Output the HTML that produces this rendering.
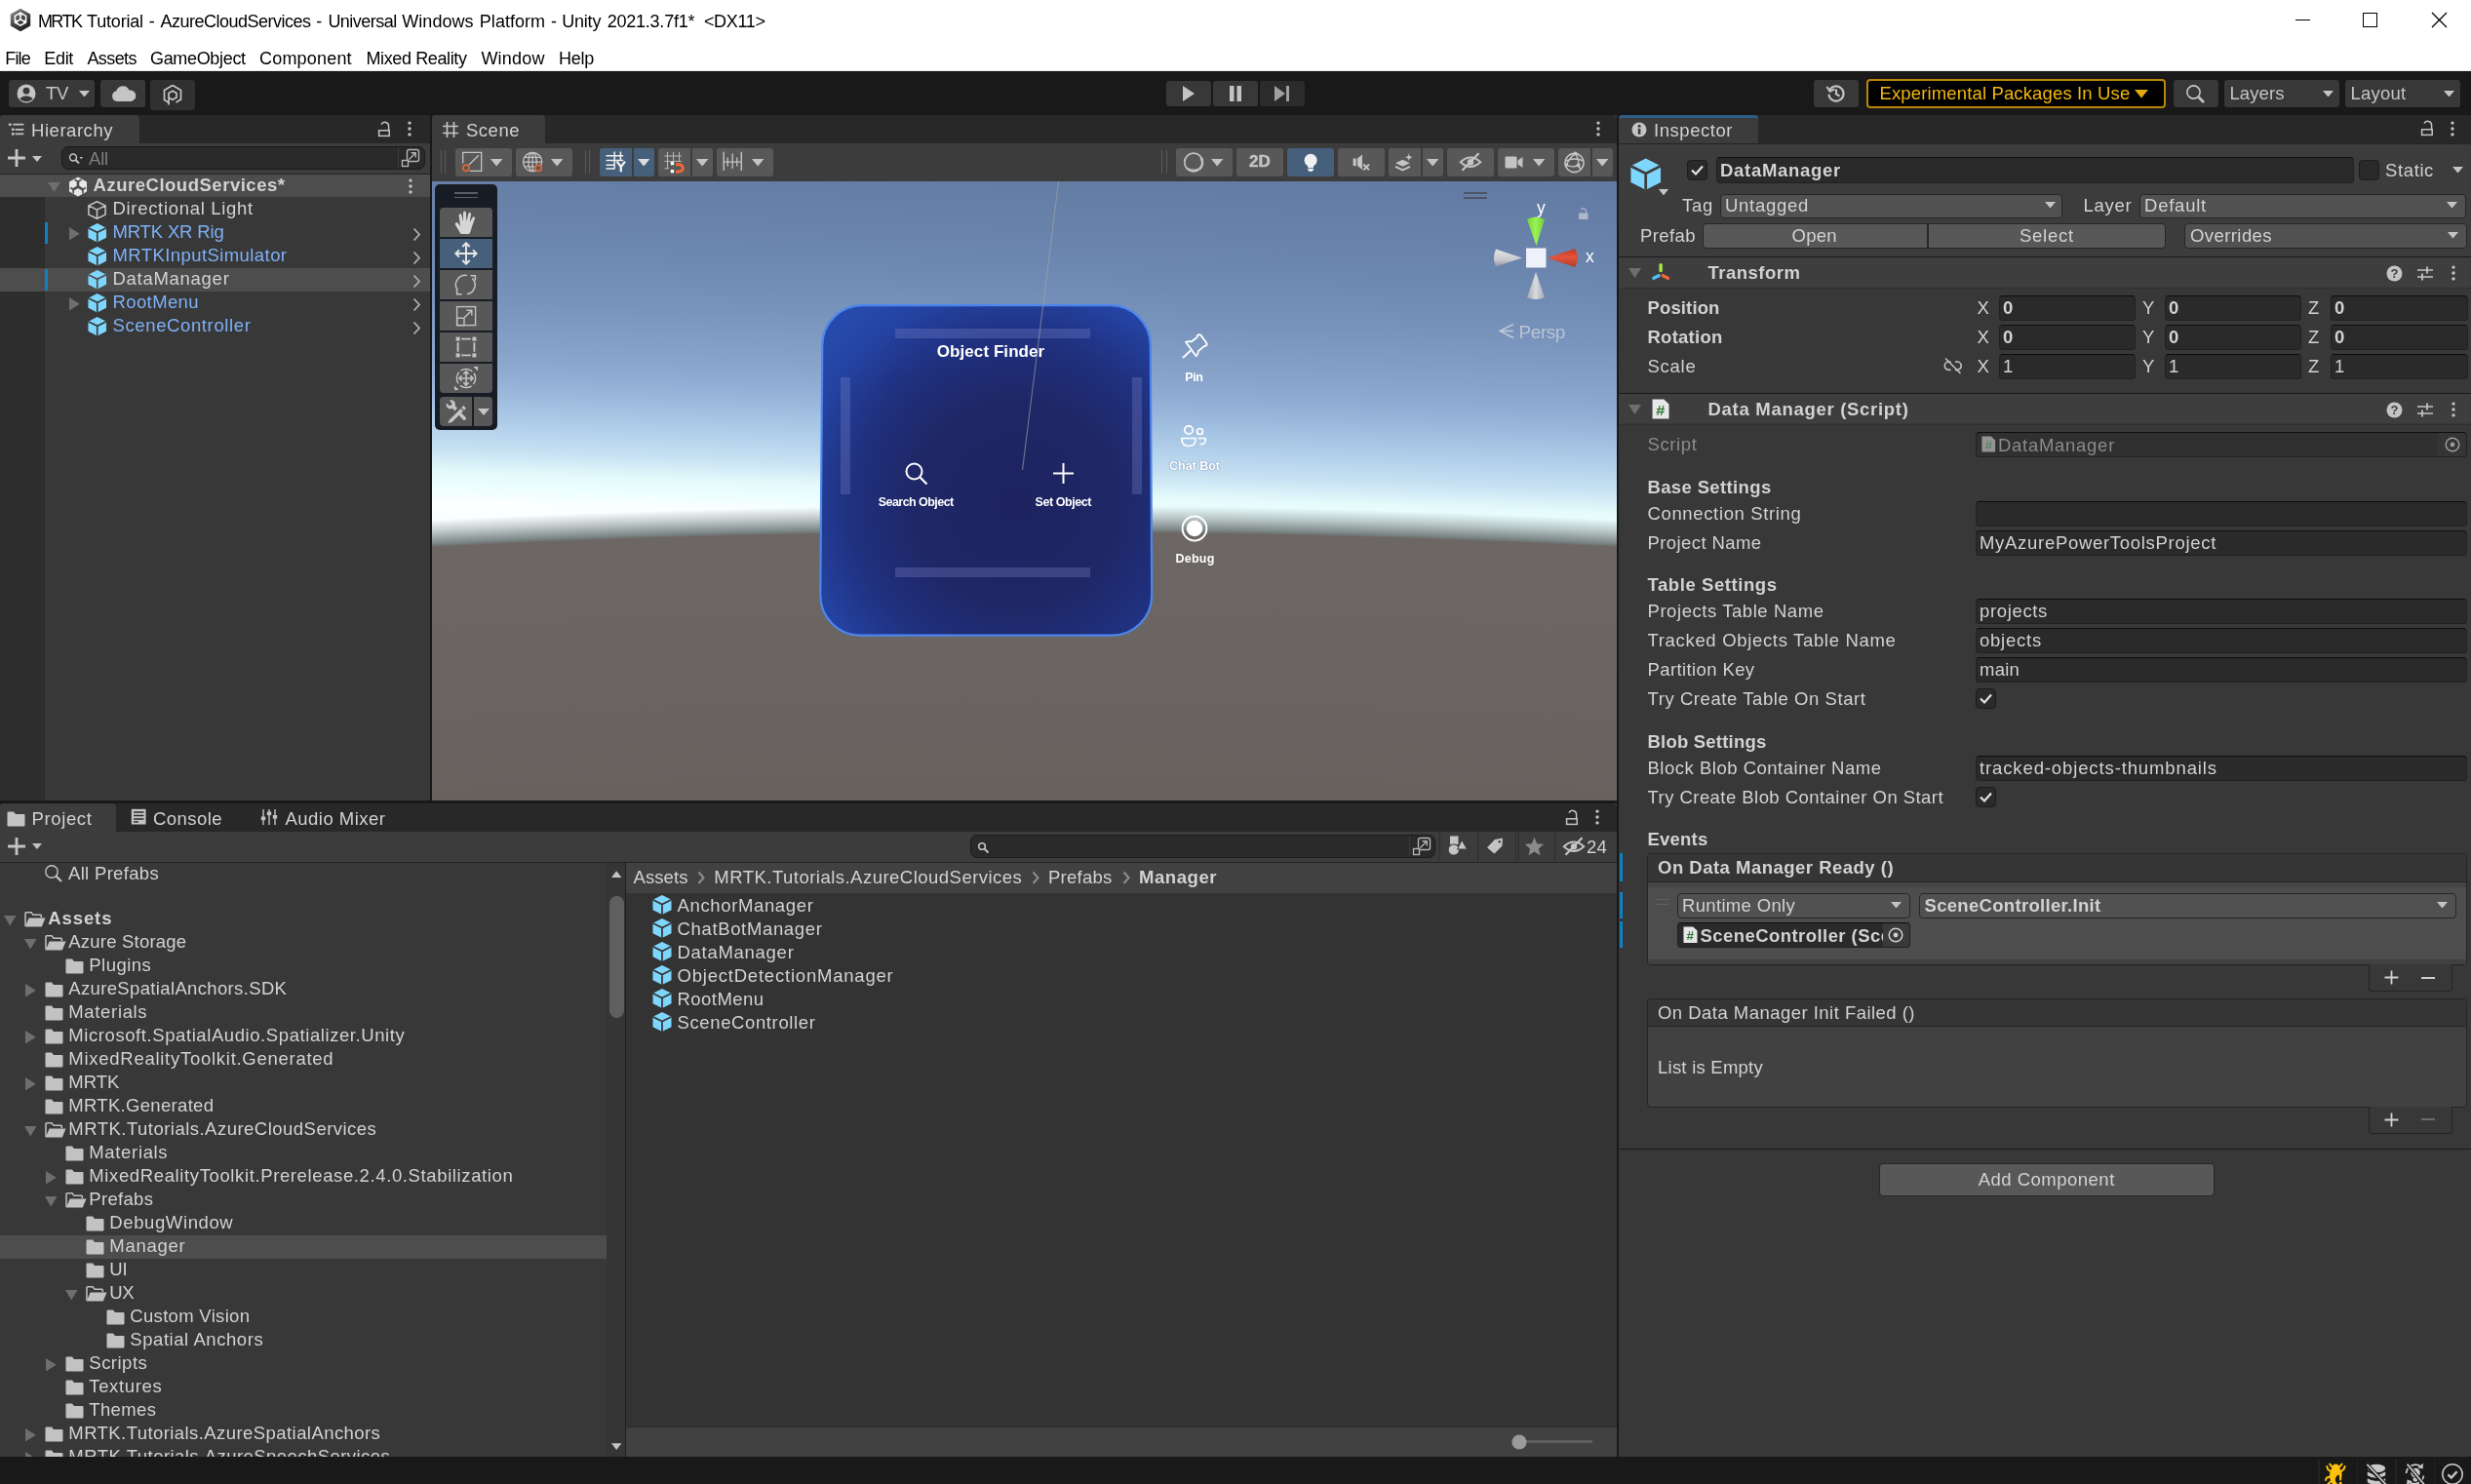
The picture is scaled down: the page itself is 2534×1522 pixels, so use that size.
<!DOCTYPE html>
<html><head><meta charset="utf-8"><title>Unity</title><style>
html,body{margin:0;padding:0;}
body{will-change:transform;width:2534px;height:1522px;position:relative;overflow:hidden;background:#383838;font-family:"Liberation Sans",sans-serif;}
div,svg{position:absolute;}
.t{white-space:nowrap;}
</style></head><body>
<div style="left:0px;top:0px;width:2534px;height:72px;background:#ffffff;"></div>
<div style="left:0px;top:72px;width:2534px;height:1px;background:#e8e8e8;"></div>
<svg style="left:9px;top:8px;" width="24" height="25" viewBox="0 0 24 25"><defs><linearGradient id="ul" x1="0" y1="0" x2="0.6" y2="1"><stop offset="0" stop-color="#9a9a9a"/><stop offset="0.55" stop-color="#4a4a4a"/><stop offset="1" stop-color="#1c1c1c"/></linearGradient></defs><path d="M12 0.8 L22.2 6.6 L22.2 18.4 L12 24.2 L1.8 18.4 L1.8 6.6 Z" fill="url(#ul)"/><path d="M12 5.2 L17.6 8.4 L17.6 15 L12 18.2 L6.4 15 L6.4 8.4 Z" fill="none" stroke="#fff" stroke-width="1.5"/><path d="M12 5.2 V11.8 M6.4 15 L12 11.8 L17.6 15" fill="none" stroke="#fff" stroke-width="1.5"/><path d="M10.2 7 H13.8 M7 12.6 L8.8 15.6 M17 12.6 L15.2 15.6" stroke="#fff" stroke-width="1.2"/></svg>
<div class="t" style="left:38.9px;top:11.3px;font-size:18px;line-height:23px;color:#000;letter-spacing:-1.52px;">MRTK</div>
<div class="t" style="left:89.0px;top:11.3px;font-size:18px;line-height:23px;color:#000;letter-spacing:-0.18px;">Tutorial</div>
<div class="t" style="left:152.8px;top:11.3px;font-size:18px;line-height:23px;color:#000;letter-spacing:0.00px;">-</div>
<div class="t" style="left:164.5px;top:11.3px;font-size:18px;line-height:23px;color:#000;letter-spacing:-0.50px;">AzureCloudServices</div>
<div class="t" style="left:324.3px;top:11.3px;font-size:18px;line-height:23px;color:#000;letter-spacing:0.00px;">-</div>
<div class="t" style="left:336.4px;top:11.3px;font-size:18px;line-height:23px;color:#000;letter-spacing:-0.52px;">Universal</div>
<div class="t" style="left:412.3px;top:11.3px;font-size:18px;line-height:23px;color:#000;letter-spacing:0.04px;">Windows</div>
<div class="t" style="left:491.8px;top:11.3px;font-size:18px;line-height:23px;color:#000;letter-spacing:0.04px;">Platform</div>
<div class="t" style="left:565.0px;top:11.3px;font-size:18px;line-height:23px;color:#000;letter-spacing:0.00px;">-</div>
<div class="t" style="left:576.2px;top:11.3px;font-size:18px;line-height:23px;color:#000;letter-spacing:-0.20px;">Unity</div>
<div class="t" style="left:622.7px;top:11.3px;font-size:18px;line-height:23px;color:#000;letter-spacing:-0.23px;">2021.3.7f1*</div>
<div class="t" style="left:721.9px;top:11.3px;font-size:18px;line-height:23px;color:#000;letter-spacing:-0.32px;">&lt;DX11&gt;</div>
<div style="left:2354px;top:20px;width:15px;height:1.3px;background:#000;"></div>
<div style="left:2423px;top:13px;width:15px;height:15px;border:1.3px solid #000;box-sizing:border-box;"></div>
<svg style="left:2493px;top:12px;" width="17" height="17" viewBox="0 0 17 17"><path d="M1 1 L16 16 M16 1 L1 16" stroke="#000" stroke-width="1.3"/></svg>
<div class="t" style="left:5.2px;top:48.5px;font-size:18px;line-height:23px;color:#000;letter-spacing:-0.80px;">File</div>
<div class="t" style="left:45.3px;top:48.5px;font-size:18px;line-height:23px;color:#000;letter-spacing:-0.33px;">Edit</div>
<div class="t" style="left:89.4px;top:48.5px;font-size:18px;line-height:23px;color:#000;letter-spacing:-0.59px;">Assets</div>
<div class="t" style="left:154.0px;top:48.5px;font-size:18px;line-height:23px;color:#000;letter-spacing:-0.33px;">GameObject</div>
<div class="t" style="left:266.0px;top:48.5px;font-size:18px;line-height:23px;color:#000;letter-spacing:0.19px;">Component</div>
<div class="t" style="left:375.5px;top:48.5px;font-size:18px;line-height:23px;color:#000;letter-spacing:-0.38px;">Mixed Reality</div>
<div class="t" style="left:493.4px;top:48.5px;font-size:18px;line-height:23px;color:#000;letter-spacing:0.21px;">Window</div>
<div class="t" style="left:573.0px;top:48.5px;font-size:18px;line-height:23px;color:#000;letter-spacing:-0.25px;">Help</div>
<div style="left:0px;top:73px;width:2534px;height:45px;background:#191919;"></div>
<div style="left:9px;top:82px;width:88px;height:28px;background:#383838;border-radius:3px;"></div>
<div style="left:103px;top:82px;width:46px;height:28px;background:#383838;border-radius:3px;"></div>
<div style="left:154px;top:82px;width:46px;height:31px;background:#303030;border-radius:3px;"></div>
<svg style="left:16px;top:85px;" width="22" height="22" viewBox="0 0 22 22"><circle cx="11" cy="11" r="9.5" fill="#c4c4c4"/><circle cx="11" cy="8.2" r="3.4" fill="#383838"/><path d="M4.2 16 Q11 10.5 17.8 16 Q15 19.2 11 19.2 Q7 19.2 4.2 16Z" fill="#383838"/></svg>
<div class="t" style="left:47.0px;top:84.0px;font-size:18.5px;line-height:24px;color:#c4c4c4;letter-spacing:-0.32px;">TV</div>
<svg style="left:80.5px;top:92.75px;" width="11" height="6.5" viewBox="0 0 11 6.5"><path d="M0 0 L11 0 L5.5 6.5 Z" fill="#c4c4c4"/></svg>
<svg style="left:113px;top:87px;" width="28" height="18" viewBox="0 0 28 18"><path d="M7 17 A5.5 5.5 0 0 1 6.3 6.2 A7 7 0 0 1 19.5 5.5 A5.8 5.8 0 0 1 21.5 17 Z" fill="#c4c4c4"/></svg>
<svg style="left:166px;top:86px;" width="22" height="24" viewBox="0 0 22 24"><path d="M11 1.5 L19.5 6.5 L19.5 16 L14.5 19 M11 1.5 L2.5 6.5 L2.5 16.5 L7 19.2" fill="none" stroke="#c4c4c4" stroke-width="1.7"/><path d="M7 21.5 L7 9.5 L11 7.2 L15 9.5 L15 14 L11 16.3 L7.8 14.5" fill="none" stroke="#c4c4c4" stroke-width="1.7"/></svg>
<div style="left:1196px;top:83px;width:46px;height:26px;background:#383838;border-radius:3px;"></div>
<div style="left:1244px;top:83px;width:46px;height:26px;background:#383838;border-radius:3px;"></div>
<div style="left:1292px;top:83px;width:46px;height:26px;background:#2b2b2b;border-radius:3px;"></div>
<svg style="left:1212px;top:87px;" width="14" height="18" viewBox="0 0 14 18"><path d="M1 1 L13 9 L1 17 Z" fill="#c4c4c4"/></svg>
<svg style="left:1260px;top:87px;" width="14" height="18" viewBox="0 0 14 18"><rect x="1" y="1" width="4.5" height="16" fill="#c4c4c4"/><rect x="8.5" y="1" width="4.5" height="16" fill="#c4c4c4"/></svg>
<svg style="left:1306px;top:87px;" width="18" height="18" viewBox="0 0 18 18"><path d="M1 1 L12 9 L1 17 Z" fill="#a0a0a0"/><rect x="13" y="1" width="3" height="16" fill="#a0a0a0"/></svg>
<div style="left:1860px;top:82px;width:46px;height:28px;background:#383838;border-radius:3px;"></div>
<svg style="left:1872px;top:86px;" width="22" height="20" viewBox="0 0 22 20"><path d="M4.2 6.5 A7.6 7.6 0 1 1 3.4 10.8" fill="none" stroke="#c4c4c4" stroke-width="2.1"/><path d="M1.4 3 L4.6 7.6 L9.4 5.4" fill="none" stroke="#c4c4c4" stroke-width="2.1"/><path d="M11 5.5 L11 10.5 L14.5 12.6" fill="none" stroke="#c4c4c4" stroke-width="2.1"/></svg>
<div style="left:1914px;top:81px;width:307px;height:30px;background:#000;border:2px solid #b8860b;border-radius:4px;box-sizing:border-box;"></div>
<div class="t" style="left:1927.5px;top:84.0px;font-size:18.5px;line-height:24px;color:#f2b70f;letter-spacing:0.14px;">Experimental Packages In Use</div>
<svg style="left:2189.0px;top:92.25px;" width="14" height="8.5" viewBox="0 0 14 8.5"><path d="M0 0 L14 0 L7.0 8.5 Z" fill="#e2a90a"/></svg>
<div style="left:2229px;top:82px;width:46px;height:28px;background:#383838;border-radius:3px;"></div>
<svg style="left:2240px;top:85px;" width="24" height="24" viewBox="0 0 24 24"><circle cx="9.5" cy="9.5" r="6.6" fill="none" stroke="#c4c4c4" stroke-width="1.6"/><path d="M14.5 14.5 L20 20" stroke="#c4c4c4" stroke-width="2.6"/></svg>
<div style="left:2281px;top:82px;width:118px;height:28px;background:#383838;border-radius:3px;"></div>
<div style="left:2405px;top:82px;width:118px;height:28px;background:#383838;border-radius:3px;"></div>
<div class="t" style="left:2286.5px;top:84.0px;font-size:18.5px;line-height:24px;color:#c4c4c4;letter-spacing:0.08px;">Layers</div>
<div class="t" style="left:2410.5px;top:84.0px;font-size:18.5px;line-height:24px;color:#c4c4c4;letter-spacing:0.24px;">Layout</div>
<svg style="left:2382.0px;top:92.75px;" width="11" height="6.5" viewBox="0 0 11 6.5"><path d="M0 0 L11 0 L5.5 6.5 Z" fill="#c4c4c4"/></svg>
<svg style="left:2506.0px;top:92.75px;" width="11" height="6.5" viewBox="0 0 11 6.5"><path d="M0 0 L11 0 L5.5 6.5 Z" fill="#c4c4c4"/></svg>
<div style="left:0px;top:1494px;width:2534px;height:28px;background:#191919;"></div>
<div style="left:0px;top:118px;width:441px;height:29px;background:#282828;"></div>
<div style="left:0px;top:118px;width:143px;height:29px;background:#3c3c3c;border-radius:4px 4px 0 0;"></div>
<svg style="left:6px;top:125px;" width="20" height="15" viewBox="0 0 20 15"><path d="M7.3 2.7 H18.3 M9.6 7.8 H18.3 M9.6 12.4 H18.3" stroke="#c4c4c4" stroke-width="1.7"/><rect x="2.9" y="1.4" width="2.7" height="2.6" rx="0.8" fill="#c4c4c4"/><rect x="5.9" y="6.5" width="2.7" height="2.6" rx="0.8" fill="#c4c4c4"/><rect x="5.9" y="11.1" width="2.7" height="2.6" rx="0.8" fill="#c4c4c4"/></svg>
<div class="t" style="left:32.0px;top:121.5px;font-size:18.5px;line-height:24px;color:#d2d2d2;letter-spacing:0.54px;">Hierarchy</div>
<svg style="left:386px;top:123px;" width="16" height="18" viewBox="0 0 16 18"><rect x="2.6" y="10.8" width="10.6" height="5.6" fill="none" stroke="#c4c4c4" stroke-width="1.5"/><path d="M12.6 10.8 V6.2 A4 4 0 0 0 5 4.6" fill="none" stroke="#c4c4c4" stroke-width="1.5"/></svg>
<svg style="left:417px;top:122px;" width="6" height="20" viewBox="0 0 6 20"><circle cx="3" cy="4.1" r="1.7" fill="#c4c4c4"/><circle cx="3" cy="10.0" r="1.7" fill="#c4c4c4"/><circle cx="3" cy="15.9" r="1.7" fill="#c4c4c4"/></svg>
<div style="left:0px;top:147px;width:441px;height:32px;background:#3c3c3c;"></div>
<div style="left:0px;top:178px;width:441px;height:1px;background:#232323;"></div>
<svg style="left:7px;top:152px;" width="20" height="20" viewBox="0 0 20 20"><path d="M10 1 V19 M1 10 H19" stroke="#c4c4c4" stroke-width="2.8"/></svg>
<svg style="left:33.0px;top:160.0px;" width="10" height="6" viewBox="0 0 10 6"><path d="M0 0 L10 0 L5.0 6 Z" fill="#c4c4c4"/></svg>
<div style="left:62.5px;top:150px;width:373.5px;height:24px;background:#2a2a2a;border:1px solid #1b1b1b;border-radius:7px;box-sizing:border-box;"></div>
<div style="left:408px;top:151px;width:1px;height:22px;background:#3c3c3c;"></div>
<svg style="left:70px;top:156px;" width="16" height="14" viewBox="0 0 16 14"><circle cx="5" cy="5.5" r="3.4" fill="none" stroke="#c4c4c4" stroke-width="1.5"/><path d="M7.5 8 L11 11.5" stroke="#c4c4c4" stroke-width="1.8"/><path d="M11.5 5 L15 5 L13.2 7.2Z" fill="#c4c4c4"/></svg>
<div class="t" style="left:91.0px;top:151.0px;font-size:18.5px;line-height:24px;color:#7f7f7f;letter-spacing:-0.19px;">All</div>
<svg style="left:411px;top:151.5px;" width="20" height="20" viewBox="0 0 20 20"><rect x="6.5" y="1.5" width="12" height="12" rx="2" fill="none" stroke="#b4b4b4" stroke-width="1.4"/><rect x="1.5" y="12.5" width="6" height="6" fill="#2a2a2a" stroke="#b4b4b4" stroke-width="1.4"/><path d="M8.5 11.5 L15 5 M10.5 4.8 L15.2 4.8 L15.2 9.5" fill="none" stroke="#b4b4b4" stroke-width="1.4"/></svg>
<div style="left:0px;top:179px;width:441px;height:642px;background:#383838;"></div>
<div style="left:0px;top:179px;width:46px;height:642px;background:#2d2d2d;"></div>
<div style="left:0px;top:179px;width:441px;height:23px;background:#4d4d4d;"></div>
<div style="left:0px;top:275px;width:441px;height:24px;background:#4d4d4d;"></div>
<svg style="left:49.0px;top:186.5px;" width="13" height="10" viewBox="0 0 13 10"><path d="M0 0 L13 0 L6.5 10 Z" fill="#6e6e6e"/></svg>
<svg style="left:69px;top:180px;" width="22" height="23" viewBox="0 0 22 23"><path d="M11 1.5 L20 6.5 L20 16.5 L11 21.5 L2 16.5 L2 6.5 Z" fill="#e6e6e6"/><path d="M11 5 L11 11.5 L5.2 14.8 M11 11.5 L16.8 14.8" stroke="#4d4d4d" stroke-width="2.6" fill="none"/><path d="M7.5 4.2 L11 6.2 L14.5 4.2 M3.2 12.5 L6.2 14.3 L6.2 18.5 M18.8 12.5 L15.8 14.3 L15.8 18.5" stroke="#4d4d4d" stroke-width="1.6" fill="none"/></svg>
<div class="t" style="left:95.5px;top:177.7px;font-size:18.5px;line-height:24px;color:#d2d2d2;letter-spacing:0.52px;font-weight:bold;">AzureCloudServices*</div>
<svg style="left:418px;top:181px;" width="6" height="20" viewBox="0 0 6 20"><circle cx="3" cy="4.1" r="1.7" fill="#c4c4c4"/><circle cx="3" cy="10.0" r="1.7" fill="#c4c4c4"/><circle cx="3" cy="15.9" r="1.7" fill="#c4c4c4"/></svg>
<svg style="left:89px;top:204.5px;" width="21" height="21" viewBox="0 0 22 22"><path d="M11 1.8 L20 6.2 L20 15.8 L11 20.2 L2 15.8 L2 6.2 Z M2 6.2 L11 10.6 L20 6.2 M11 10.6 L11 20.2" fill="none" stroke="#c4c4c4" stroke-width="1.6" stroke-linejoin="round"/></svg>
<div class="t" style="left:115.5px;top:201.6px;font-size:18.5px;line-height:24px;color:#d2d2d2;letter-spacing:0.69px;">Directional Light</div>
<svg style="left:89px;top:228px;" width="21.5" height="21.5" viewBox="0 0 22 22"><path d="M11 1 L20.5 5.8 L20.5 16.2 L11 21 L1.5 16.2 L1.5 5.8 Z" fill="#7fd6fd"/><path d="M1.5 5.8 L11 10.6 L20.5 5.8 M11 10.6 L11 21" fill="none" stroke="#383838" stroke-width="1.7"/></svg>
<div class="t" style="left:115.5px;top:225.6px;font-size:18.5px;line-height:24px;color:#7fb0f5;letter-spacing:-0.16px;">MRTK XR Rig</div>
<svg style="left:71.39999999999999px;top:232.85px;" width="10.8" height="13.5" viewBox="0 0 10.8 13.5"><path d="M0 0 L10.8 6.75 L0 13.5 Z" fill="#6e6e6e"/></svg>
<div style="left:46px;top:228px;width:3px;height:22px;background:#0f81be;"></div>
<svg style="left:423.0px;top:232.5px;" width="9" height="15" viewBox="0 0 9 15"><path d="M1.5 1.5 L7 7.5 L1.5 13.5" fill="none" stroke="#b0b0b0" stroke-width="1.8"/></svg>
<svg style="left:89px;top:252px;" width="21.5" height="21.5" viewBox="0 0 22 22"><path d="M11 1 L20.5 5.8 L20.5 16.2 L11 21 L1.5 16.2 L1.5 5.8 Z" fill="#7fd6fd"/><path d="M1.5 5.8 L11 10.6 L20.5 5.8 M11 10.6 L11 21" fill="none" stroke="#383838" stroke-width="1.7"/></svg>
<div class="t" style="left:115.5px;top:249.6px;font-size:18.5px;line-height:24px;color:#7fb0f5;letter-spacing:0.42px;">MRTKInputSimulator</div>
<svg style="left:423.0px;top:256.5px;" width="9" height="15" viewBox="0 0 9 15"><path d="M1.5 1.5 L7 7.5 L1.5 13.5" fill="none" stroke="#b0b0b0" stroke-width="1.8"/></svg>
<svg style="left:89px;top:276px;" width="21.5" height="21.5" viewBox="0 0 22 22"><path d="M11 1 L20.5 5.8 L20.5 16.2 L11 21 L1.5 16.2 L1.5 5.8 Z" fill="#7fd6fd"/><path d="M1.5 5.8 L11 10.6 L20.5 5.8 M11 10.6 L11 21" fill="none" stroke="#4d4d4d" stroke-width="1.7"/></svg>
<div class="t" style="left:115.5px;top:273.6px;font-size:18.5px;line-height:24px;color:#d2d2d2;letter-spacing:0.72px;">DataManager</div>
<div style="left:46px;top:276px;width:3px;height:22px;background:#0f81be;"></div>
<svg style="left:423.0px;top:280.5px;" width="9" height="15" viewBox="0 0 9 15"><path d="M1.5 1.5 L7 7.5 L1.5 13.5" fill="none" stroke="#b0b0b0" stroke-width="1.8"/></svg>
<svg style="left:89px;top:300px;" width="21.5" height="21.5" viewBox="0 0 22 22"><path d="M11 1 L20.5 5.8 L20.5 16.2 L11 21 L1.5 16.2 L1.5 5.8 Z" fill="#7fd6fd"/><path d="M1.5 5.8 L11 10.6 L20.5 5.8 M11 10.6 L11 21" fill="none" stroke="#383838" stroke-width="1.7"/></svg>
<div class="t" style="left:115.5px;top:297.6px;font-size:18.5px;line-height:24px;color:#7fb0f5;letter-spacing:0.39px;">RootMenu</div>
<svg style="left:71.39999999999999px;top:304.85px;" width="10.8" height="13.5" viewBox="0 0 10.8 13.5"><path d="M0 0 L10.8 6.75 L0 13.5 Z" fill="#6e6e6e"/></svg>
<svg style="left:423.0px;top:304.5px;" width="9" height="15" viewBox="0 0 9 15"><path d="M1.5 1.5 L7 7.5 L1.5 13.5" fill="none" stroke="#b0b0b0" stroke-width="1.8"/></svg>
<svg style="left:89px;top:324px;" width="21.5" height="21.5" viewBox="0 0 22 22"><path d="M11 1 L20.5 5.8 L20.5 16.2 L11 21 L1.5 16.2 L1.5 5.8 Z" fill="#7fd6fd"/><path d="M1.5 5.8 L11 10.6 L20.5 5.8 M11 10.6 L11 21" fill="none" stroke="#383838" stroke-width="1.7"/></svg>
<div class="t" style="left:115.5px;top:321.6px;font-size:18.5px;line-height:24px;color:#7fb0f5;letter-spacing:0.62px;">SceneController</div>
<svg style="left:423.0px;top:328.5px;" width="9" height="15" viewBox="0 0 9 15"><path d="M1.5 1.5 L7 7.5 L1.5 13.5" fill="none" stroke="#b0b0b0" stroke-width="1.8"/></svg>
<div style="left:441px;top:118px;width:2px;height:703px;background:#191919;"></div>
<div style="left:0px;top:821px;width:1658px;height:3px;background:#191919;"></div>
<div style="left:443px;top:118px;width:1215px;height:29px;background:#282828;border-radius:0 5px 0 0;"></div>
<div style="left:443px;top:118px;width:116px;height:29px;background:#3c3c3c;border-radius:4px 4px 0 0;"></div>
<svg style="left:453px;top:124px;" width="18" height="18" viewBox="0 0 18 18"><path d="M5.5 1 V17 M12.5 1 V17 M1 5.5 H17 M1 12.5 H17" stroke="#c4c4c4" stroke-width="1.7"/></svg>
<div class="t" style="left:478.0px;top:121.5px;font-size:18.5px;line-height:24px;color:#d2d2d2;letter-spacing:0.51px;">Scene</div>
<svg style="left:1635.5px;top:122px;" width="6" height="20" viewBox="0 0 6 20"><circle cx="3" cy="4.1" r="1.7" fill="#c4c4c4"/><circle cx="3" cy="10.0" r="1.7" fill="#c4c4c4"/><circle cx="3" cy="15.9" r="1.7" fill="#c4c4c4"/></svg>
<div style="left:443px;top:147px;width:1215px;height:39px;background:#3c3c3c;"></div>
<div style="left:451.5px;top:154px;width:1.3px;height:24px;background:#5a5a5a;"></div>
<div style="left:456.1px;top:154px;width:1.3px;height:24px;background:#5a5a5a;"></div>
<div style="left:467px;top:152px;width:58px;height:29px;background:#585858;border-radius:3px;"></div>
<div style="left:529px;top:152px;width:58px;height:29px;background:#585858;border-radius:3px;"></div>
<svg style="left:472px;top:154px;" width="24" height="24" viewBox="0 0 24 24"><path d="M2.7 13.6 V2.4 H21.7 V21.4 H9.8" fill="none" stroke="#c4c4c4" stroke-width="1.3"/><path d="M9 15 L18.8 5.2" stroke="#c4c4c4" stroke-width="1.3"/><circle cx="6" cy="18.3" r="3.1" fill="none" stroke="#f2673a" stroke-width="1.5"/></svg>
<svg style="left:503.3px;top:163.2px;" width="12.4" height="7.6" viewBox="0 0 12.4 7.6"><path d="M0 0 L12.4 0 L6.2 7.6 Z" fill="#c4c4c4"/></svg>
<svg style="left:534px;top:154px;" width="26" height="24" viewBox="0 0 26 24"><circle cx="12.1" cy="12.1" r="9.6" fill="none" stroke="#c4c4c4" stroke-width="1.3"/><ellipse cx="12.1" cy="12.1" rx="4.2" ry="9.6" fill="none" stroke="#c4c4c4" stroke-width="1.3"/><path d="M2.5 12.1 H21.7 M4 7.3 H20.2 M4 16.9 H14 M12.1 2.5 V21.7" stroke="#c4c4c4" stroke-width="1.2"/><circle cx="18" cy="18.3" r="4" fill="#585858"/><circle cx="18" cy="18.3" r="3.1" fill="none" stroke="#f2673a" stroke-width="1.5"/></svg>
<svg style="left:565.3px;top:163.2px;" width="12.4" height="7.6" viewBox="0 0 12.4 7.6"><path d="M0 0 L12.4 0 L6.2 7.6 Z" fill="#c4c4c4"/></svg>
<div style="left:599.5px;top:154px;width:1.3px;height:24px;background:#5a5a5a;"></div>
<div style="left:604.1px;top:154px;width:1.3px;height:24px;background:#5a5a5a;"></div>
<div style="left:615px;top:152px;width:33px;height:29px;background:#46607c;border-radius:3px 0 0 3px;"></div>
<div style="left:650px;top:152px;width:21px;height:29px;background:#46607c;border-radius:0 3px 3px 0;"></div>
<svg style="left:620px;top:155px;" width="24" height="24" viewBox="0 0 24 24"><path d="M10.2 0.4 V18.5 M16.4 0.4 V10 M1.5 4.7 H19.2 M1.5 9.6 H19.2 M1.5 14.2 H10.5 M1.5 17.9 H10.5" stroke="#f0f0f0" stroke-width="1.5"/><path d="M12.6 10.6 L16.8 16 L16.8 21.2 M21 10.6 L16.8 16" stroke="#f0f0f0" stroke-width="2.3" fill="none"/></svg>
<svg style="left:654.3px;top:162.7px;" width="12.4" height="7.6" viewBox="0 0 12.4 7.6"><path d="M0 0 L12.4 0 L6.2 7.6 Z" fill="#dcdcdc"/></svg>
<div style="left:675px;top:152px;width:33px;height:29px;background:#585858;border-radius:3px 0 0 3px;"></div>
<div style="left:710px;top:152px;width:21px;height:29px;background:#585858;border-radius:0 3px 3px 0;"></div>
<svg style="left:680px;top:155px;" width="24" height="24" viewBox="0 0 24 24"><path d="M4.5 1 V18 M10.6 1 V11 M16.5 1 V11 M1.4 5 H19 M1.4 10.4 H19 M1.4 17.8 H6" stroke="#c4c4c4" stroke-width="0.9"/><rect x="7.8" y="11" width="3.3" height="3.3" fill="#fff"/><rect x="7.8" y="19" width="3.3" height="3.3" fill="#fff"/><path d="M13 13.8 H16.6 A3.6 3.6 0 0 1 16.6 21 H13" fill="none" stroke="#f2673a" stroke-width="3"/></svg>
<svg style="left:714.3px;top:162.7px;" width="12.4" height="7.6" viewBox="0 0 12.4 7.6"><path d="M0 0 L12.4 0 L6.2 7.6 Z" fill="#c4c4c4"/></svg>
<div style="left:735px;top:152px;width:58px;height:29px;background:#585858;border-radius:3px;"></div>
<svg style="left:741px;top:155px;" width="24" height="22" viewBox="0 0 24 22"><path d="M1.2 0.8 V20 M19.3 0.8 V20" stroke="#c4c4c4" stroke-width="1.4"/><path d="M10.2 2.5 V18 M5.2 6.5 V15.5 M14.8 6.5 V15.5" stroke="#c4c4c4" stroke-width="1.3"/><path d="M1.2 11.1 H19.3" stroke="#c4c4c4" stroke-width="1.2"/></svg>
<svg style="left:770.8px;top:163.2px;" width="12.4" height="7.6" viewBox="0 0 12.4 7.6"><path d="M0 0 L12.4 0 L6.2 7.6 Z" fill="#c4c4c4"/></svg>
<div style="left:1191px;top:154px;width:1.3px;height:24px;background:#5a5a5a;"></div>
<div style="left:1195.6px;top:154px;width:1.3px;height:24px;background:#5a5a5a;"></div>
<div style="left:1206px;top:152px;width:58px;height:29px;background:#585858;border-radius:3px;"></div>
<div style="left:1268px;top:152px;width:48px;height:29px;background:#585858;border-radius:3px;"></div>
<div style="left:1320px;top:152px;width:48px;height:29px;background:#46607c;border-radius:3px;"></div>
<div style="left:1372px;top:152px;width:48px;height:29px;background:#585858;border-radius:3px;"></div>
<div style="left:1424px;top:152px;width:33px;height:29px;background:#585858;border-radius:3px 0 0 3px;"></div>
<div style="left:1459px;top:152px;width:21px;height:29px;background:#585858;border-radius:0 3px 3px 0;"></div>
<div style="left:1484px;top:152px;width:48px;height:29px;background:#585858;border-radius:3px;"></div>
<div style="left:1536px;top:152px;width:58px;height:29px;background:#585858;border-radius:3px;"></div>
<div style="left:1598px;top:152px;width:33px;height:29px;background:#585858;border-radius:3px 0 0 3px;"></div>
<div style="left:1633px;top:152px;width:21px;height:29px;background:#585858;border-radius:0 3px 3px 0;"></div>
<svg style="left:1212px;top:154px;" width="26" height="26" viewBox="0 0 26 26"><circle cx="12" cy="12.5" r="9.3" fill="none" stroke="#c4c4c4" stroke-width="1.7"/><path d="M3.2 15.5 A9.3 9.3 0 0 0 20.8 15.5 A10.5 9 0 0 1 3.2 15.5Z" fill="#c4c4c4" opacity="0.85"/><path d="M19.8 8 A9.3 9.3 0 0 1 18.5 19" fill="none" stroke="#c4c4c4" stroke-width="2.6"/></svg>
<svg style="left:1242.3px;top:163.2px;" width="12.4" height="7.6" viewBox="0 0 12.4 7.6"><path d="M0 0 L12.4 0 L6.2 7.6 Z" fill="#c4c4c4"/></svg>
<div class="t" style="left:1281.1px;top:155.3px;font-size:17px;line-height:22px;color:#c4c4c4;letter-spacing:0.00px;font-weight:bold;-webkit-text-stroke:0.45px #c4c4c4;">2D</div>
<svg style="left:1334px;top:155px;" width="20" height="24" viewBox="0 0 20 24"><circle cx="10.1" cy="9.3" r="6.5" fill="#f0f0f0"/><rect x="7.2" y="14" width="5.8" height="3.2" fill="#f0f0f0"/><path d="M7.2 18 H13 V18.5 A2.9 2.4 0 0 1 7.2 18.5Z" fill="#f0f0f0"/></svg>
<svg style="left:1386px;top:157px;" width="22" height="20" viewBox="0 0 22 20"><rect x="1.6" y="5.5" width="3.2" height="7.6" fill="#c4c4c4"/><path d="M6 5.5 L11 1.5 V17 L6 13Z" fill="#c4c4c4"/><path d="M12.2 11.5 L18 17.3 M18 11.5 L12.2 17.3" stroke="#c4c4c4" stroke-width="1.9"/></svg>
<svg style="left:1429px;top:155px;" width="24" height="24" viewBox="0 0 24 24"><path d="M2 12.2 L9.5 8.7 L17 12.2 L9.5 15.7Z" fill="#c4c4c4"/><path d="M2 15.8 L9.5 19.3 L17 15.8" fill="none" stroke="#c4c4c4" stroke-width="2"/><path d="M15.8 1.5 L17.1 5 L20.6 6.3 L17.1 7.6 L15.8 11.1 L14.5 7.6 L11 6.3 L14.5 5Z" fill="#c4c4c4" stroke="#585858" stroke-width="0.8"/></svg>
<svg style="left:1463.3px;top:162.7px;" width="12.4" height="7.6" viewBox="0 0 12.4 7.6"><path d="M0 0 L12.4 0 L6.2 7.6 Z" fill="#c4c4c4"/></svg>
<svg style="left:1496px;top:156px;" width="24" height="20" viewBox="0 0 24 20"><path d="M1.8 10.2 Q12 0.8 22.2 10.2 Q12 19.6 1.8 10.2Z" fill="none" stroke="#c4c4c4" stroke-width="2.0"/><circle cx="12" cy="10.2" r="3.2" fill="#c4c4c4"/><path d="M3.5 18.8 L20.5 1.2" stroke="#c4c4c4" stroke-width="2.2"/></svg>
<svg style="left:1543px;top:159px;" width="20" height="15" viewBox="0 0 20 15"><rect x="0.5" y="1.5" width="12" height="12" rx="1.2" fill="#c4c4c4"/><path d="M13.5 5.5 L18.5 2 V13 L13.5 9.5Z" fill="#c4c4c4"/></svg>
<svg style="left:1572.3px;top:163.2px;" width="12.4" height="7.6" viewBox="0 0 12.4 7.6"><path d="M0 0 L12.4 0 L6.2 7.6 Z" fill="#c4c4c4"/></svg>
<svg style="left:1603px;top:154px;" width="24" height="26" viewBox="0 0 24 26"><circle cx="11.5" cy="13" r="9.6" fill="none" stroke="#c4c4c4" stroke-width="1.6"/><path d="M12.5 3.4 Q16.5 10 15.5 15.5 Q9 18.5 3.5 15 M12.5 3.4 Q6 8.5 3.5 15 M15.5 15.5 Q17.5 18.5 18 20 M2.2 11 Q12 7 20.8 11" fill="none" stroke="#c4c4c4" stroke-width="1.4"/><circle cx="12.5" cy="3.4" r="2" fill="#c4c4c4"/><circle cx="15.5" cy="15.5" r="2" fill="#c4c4c4"/><circle cx="3.5" cy="15" r="1.8" fill="#c4c4c4"/></svg>
<svg style="left:1637.3px;top:162.7px;" width="12.4" height="7.6" viewBox="0 0 12.4 7.6"><path d="M0 0 L12.4 0 L6.2 7.6 Z" fill="#c4c4c4"/></svg>
<div style="left:443px;top:186px;width:1215px;height:635px;overflow:hidden;background:linear-gradient(182deg,rgb(98,122,162) 0px,rgb(99,123,163) 10px,rgb(103,129,169) 60px,rgb(109,136,177) 112px,rgb(120,148,188) 164px,rgb(135,163,202) 215px,rgb(145,173,212) 240px,rgb(160,190,223) 266px,rgb(178,208,235) 292px,rgb(200,226,243) 317px,rgb(228,250,251) 340px,rgb(236,254,254) 353px,rgb(250,255,255) 370px,rgb(250,255,255) 677px);">
<div style="left:0;top:0;width:1215px;height:635px;background:radial-gradient(circle 13000px at 607.5px 12359.8px,#68625f 0,#68625f 11725px,#6c6765 12000px,rgba(94,106,106,0.83) 12003px,rgba(94,108,108,0.40) 12015px,rgba(94,108,108,0) 12028px);"></div>
</div>
<div style="left:446px;top:189px;width:64px;height:252px;background:#181d25;border-radius:5px;"></div>
<div style="left:466px;top:197.3px;width:24px;height:1.4px;background:#5a5f66;"></div>
<div style="left:466px;top:202px;width:24px;height:1.4px;background:#5a5f66;"></div>
<div style="left:451px;top:213px;width:54px;height:30px;background:#585858;border-radius:4px 4px 0 0;"></div>
<div style="left:451px;top:245px;width:54px;height:30px;background:#46607c;border-radius:0;"></div>
<div style="left:451px;top:277px;width:54px;height:30px;background:#585858;border-radius:0;"></div>
<div style="left:451px;top:309px;width:54px;height:30px;background:#585858;border-radius:0;"></div>
<div style="left:451px;top:341px;width:54px;height:30px;background:#585858;border-radius:0;"></div>
<div style="left:451px;top:373px;width:54px;height:30px;background:#585858;border-radius:0 0 4px 4px;"></div>
<div style="left:451px;top:407px;width:33px;height:30px;background:#585858;border-radius:4px 0 0 4px;"></div>
<div style="left:486px;top:407px;width:19px;height:30px;background:#585858;border-radius:0 4px 4px 0;"></div>
<svg style="left:465px;top:215px;" width="26" height="26" viewBox="0 0 26 26"><path d="M7.5 25 L2.2 16 Q1 14 2.6 13.3 Q4.2 12.8 5.3 14.6 L7.2 17.4 L5.6 6 Q5.5 4.4 6.9 4.3 Q8.2 4.2 8.5 5.8 L10 12.5 L10 3 Q10 1.4 11.5 1.4 Q12.9 1.4 12.9 3 L13.4 12.3 L15.3 4.2 Q15.7 2.8 17 3.1 Q18.3 3.5 18 5 L16.7 13.2 L19.6 8 Q20.3 6.8 21.4 7.4 Q22.4 8 21.9 9.3 L18.6 18.5 Q18 22.5 16.2 25 Z" fill="#d6d6d6"/></svg>
<svg style="left:466px;top:248px;" width="24" height="24" viewBox="0 0 24 24"><path d="M12 1.2 V22.8 M1.2 12 H22.8" stroke="#e8e8e8" stroke-width="1.9"/><path d="M8.3 5 L12 1.3 L15.7 5 M8.3 19 L12 22.7 L15.7 19 M5 8.3 L1.3 12 L5 15.7 M19 8.3 L22.7 12 L19 15.7" fill="none" stroke="#e8e8e8" stroke-width="1.9"/></svg>
<svg style="left:466px;top:280px;" width="24" height="24" viewBox="0 0 24 24"><path d="M18.4 5.4 A9.6 9.6 0 0 1 12.9 21.6" fill="none" stroke="#c4c4c4" stroke-width="1.5"/><path d="M13 2.45 A9.8 9.8 0 0 0 2.9 17.2" fill="none" stroke="#c4c4c4" stroke-width="1.5"/><path d="M16.6 2.8 H21.4 V7.8 M2.6 16.8 V21.8 H7.6" fill="none" stroke="#c4c4c4" stroke-width="1.5"/></svg>
<svg style="left:467px;top:313px;" width="22" height="22" viewBox="0 0 22 22"><rect x="1.6" y="1.6" width="19" height="19" fill="none" stroke="#c4c4c4" stroke-width="1.4"/><rect x="1.6" y="13.2" width="7.4" height="7.4" fill="none" stroke="#c4c4c4" stroke-width="1.4"/><path d="M9.2 12.8 L16.6 5.4 M11.4 5.2 H16.8 V10.6" fill="none" stroke="#c4c4c4" stroke-width="1.4"/></svg>
<svg style="left:467px;top:345px;" width="22" height="22" viewBox="0 0 22 22"><path d="M6.2 2.6 H15.8 M6.2 19.4 H15.8 M2.6 6.2 V15.8 M19.4 6.2 V15.8" stroke="#c4c4c4" stroke-width="1.9"/><rect x="0.6" y="0.6" width="4" height="4" fill="#c4c4c4"/><rect x="17.4" y="0.6" width="4" height="4" fill="#c4c4c4"/><rect x="0.6" y="17.4" width="4" height="4" fill="#c4c4c4"/><rect x="17.4" y="17.4" width="4" height="4" fill="#c4c4c4"/></svg>
<svg style="left:465px;top:375px;" width="26" height="26" viewBox="0 0 26 26"><circle cx="13" cy="13" r="9.6" fill="none" stroke="#c4c4c4" stroke-width="1.5" stroke-dasharray="12.5 2.6" stroke-dashoffset="6"/><path d="M13 6 V20 M6 13 H20" stroke="#c4c4c4" stroke-width="1.6"/><path d="M10.4 8.6 L13 6 L15.6 8.6 M10.4 17.4 L13 20 L15.6 17.4 M8.6 10.4 L6 13 L8.6 15.6 M17.4 10.4 L20 13 L17.4 15.6" fill="none" stroke="#c4c4c4" stroke-width="1.6"/><path d="M1 20.5 V25 H5.5Z M25 5.5 V1 H20.5Z" fill="#c4c4c4"/></svg>
<svg style="left:456px;top:410px;" width="24" height="24" viewBox="0 0 24 24"><path d="M5 20.5 L16.5 9 L19 11.5 L7.5 23 L3.2 24 Z" fill="#c4c4c4"/><path d="M17.3 8 L19.3 6 L22 8.7 L20 10.7Z" fill="#c4c4c4"/><path d="M10.5 11.5 L7.8 8.8 A4.2 4.2 0 0 1 2 3.4 L4.8 6.2 L7 5.6 L7.6 3.4 L4.8 0.8 A4.2 4.2 0 0 1 10.6 6.2 L13 8.6Z" fill="#c4c4c4"/><path d="M13.5 14.5 L15.8 12.2 L21.5 18 Q22.6 19.4 21.3 20.6 Q20 21.7 18.9 20.4Z" fill="#c4c4c4"/></svg>
<svg style="left:489.5px;top:419.0px;" width="12" height="7" viewBox="0 0 12 7"><path d="M0 0 L12 0 L6.0 7 Z" fill="#c4c4c4"/></svg>
<svg style="left:830px;top:300px;" width="365" height="365" viewBox="0 0 365 365"><defs><radialGradient id="cg" cx="0.59" cy="0.6" r="0.74"><stop offset="0" stop-color="#1e2360"/><stop offset="0.42" stop-color="#1f2766"/><stop offset="0.68" stop-color="#203180"/><stop offset="0.9" stop-color="#2444a4"/><stop offset="1" stop-color="#2649ac"/></radialGradient></defs><path d="M54.6 13.2 L308.6 13.2 A41 41 0 0 1 349.8 54.2 L351.2 310.6 A41 41 0 0 1 310.4 351.6 L52.0 351.6 A41 41 0 0 1 11.3 310.6 L13.3 54.2 A41 41 0 0 1 54.6 13.2 Z" fill="url(#cg)" stroke="#4d86ee" stroke-width="2.2"/></svg>
<div style="left:918px;top:337px;width:200px;height:10px;background:rgba(120,130,200,0.32);"></div>
<div style="left:918px;top:582px;width:200px;height:10px;background:rgba(120,130,200,0.32);"></div>
<div style="left:862px;top:387px;width:9.5px;height:120px;background:rgba(120,130,200,0.32);"></div>
<div style="left:1161px;top:387px;width:9.5px;height:120px;background:rgba(120,130,200,0.32);"></div>
<svg style="left:1040px;top:186px;" width="50" height="300" viewBox="0 0 50 300"><path d="M45.6 0 L8.5 296" stroke="rgba(165,165,165,0.62)" stroke-width="1.1" fill="none"/></svg>
<div class="t" style="left:960.8px;top:350.0px;font-size:17px;line-height:22px;color:#fff;letter-spacing:0.07px;font-weight:bold;">Object Finder</div>
<svg style="left:927px;top:473px;" width="26" height="26" viewBox="0 0 26 26"><circle cx="10.5" cy="10.5" r="8" fill="none" stroke="#fff" stroke-width="2"/><path d="M16.5 16.5 L23.5 23.5" stroke="#fff" stroke-width="2.2"/></svg>
<div class="t" style="left:900.7px;top:506.5px;font-size:12.5px;line-height:16px;color:#fff;letter-spacing:-0.54px;font-weight:bold;">Search Object</div>
<svg style="left:1079px;top:474px;" width="23" height="23" viewBox="0 0 23 23"><path d="M11.5 1 V22 M1 11.5 H22" stroke="#fff" stroke-width="2"/></svg>
<div class="t" style="left:1061.5px;top:506.5px;font-size:12.5px;line-height:16px;color:#fff;letter-spacing:-0.43px;font-weight:bold;">Set Object</div>
<svg style="left:1210px;top:340px;" width="30" height="30" viewBox="0 0 30 30"><path d="M16.5 3.5 Q18.5 1.8 20.3 3.5 L26.5 9.8 Q28 11.5 26.5 13 L24.5 14 L19.5 19.5 Q20 23 18 25 L5.5 12 Q8 10.5 11 11 L16 6 Z" fill="none" stroke="#fff" stroke-width="1.8" stroke-linejoin="round" transform="rotate(8 15 15)"/><path d="M11 19.5 L3 27" stroke="#fff" stroke-width="1.8"/></svg>
<div class="t" style="left:1215.3px;top:378.5px;font-size:12.5px;line-height:16px;color:#fff;letter-spacing:-0.48px;font-weight:bold;">Pin</div>
<svg style="left:1209px;top:434px;" width="30" height="26" viewBox="0 0 30 26"><circle cx="10" cy="7" r="4.2" fill="none" stroke="#fff" stroke-width="1.7"/><circle cx="21.5" cy="8.5" r="3" fill="none" stroke="#fff" stroke-width="1.7"/><path d="M3 15.5 H17 Q17.5 23.5 10 23.5 Q2.5 23.5 3 15.5Z" fill="none" stroke="#fff" stroke-width="1.7"/><path d="M19.5 15.5 H27 Q28.5 22 21.5 21.5" fill="none" stroke="#fff" stroke-width="1.7"/></svg>
<div class="t" style="left:1199.0px;top:469.5px;font-size:12.5px;line-height:16px;color:#fff;letter-spacing:-0.01px;font-weight:bold;text-shadow:0 0 1.5px rgba(110,135,175,0.95),0 0 1px rgba(110,135,175,0.9);">Chat Bot</div>
<svg style="left:1210px;top:526.5px;" width="30" height="30" viewBox="0 0 30 30"><circle cx="15" cy="15" r="12.4" fill="none" stroke="#fff" stroke-width="2"/><circle cx="15" cy="15" r="8.3" fill="#fff"/></svg>
<div class="t" style="left:1205.6px;top:564.5px;font-size:12.5px;line-height:16px;color:#fff;letter-spacing:0.22px;font-weight:bold;">Debug</div>
<div style="left:1501px;top:196.8px;width:24px;height:2px;background:#4e5468;"></div>
<div style="left:1501px;top:201.8px;width:24px;height:2px;background:#4e5468;"></div>
<svg style="left:1525px;top:205px;" width="110" height="110" viewBox="0 0 110 110"><defs>
<linearGradient id="gg" x1="0" x2="1"><stop offset="0" stop-color="#7bd43a"/><stop offset="0.5" stop-color="#9af456"/><stop offset="1" stop-color="#74c93a"/></linearGradient>
<linearGradient id="gr" y1="0" y2="1" x1="0" x2="0"><stop offset="0" stop-color="#b83a25"/><stop offset="0.45" stop-color="#e5533a"/><stop offset="1" stop-color="#b43a28"/></linearGradient>
<linearGradient id="gl" y1="0" y2="1" x1="0" x2="0"><stop offset="0" stop-color="#e4e4e6"/><stop offset="0.6" stop-color="#c9cad0"/><stop offset="1" stop-color="#8f939c"/></linearGradient>
<linearGradient id="gb" x1="0" x2="1"><stop offset="0" stop-color="#a4a8b1"/><stop offset="0.5" stop-color="#dadbe0"/><stop offset="1" stop-color="#a4a8b1"/></linearGradient>
</defs>
<path d="M41 20 Q50 15 59 20 L50.5 47 Z" fill="url(#gg)"/>
<path d="M62 59.5 L90 50 Q96 59.5 90 69 Z" fill="url(#gr)"/>
<path d="M36 59.5 L9 50.5 Q5 59.5 9 68.5 Z" fill="url(#gl)"/>
<path d="M50 74 L59 100 Q50 104 41 100 Z" fill="url(#gb)"/>
<rect x="40" y="49.5" width="20.5" height="20" fill="#eef0fa"/></svg>
<div class="t" style="left:1576.1px;top:202.0px;font-size:17.5px;line-height:23px;color:#fff;letter-spacing:0.00px;">y</div>
<div class="t" style="left:1626.1px;top:252.0px;font-size:17.5px;line-height:23px;color:#fff;letter-spacing:0.00px;">x</div>
<svg style="left:1618px;top:212px;" width="12" height="14" viewBox="0 0 12 14"><rect x="1" y="6.5" width="9.5" height="6.5" fill="#aeb7c9"/><path d="M8.5 6.5 V4.2 A2.6 2.6 0 0 0 3.6 3.2" fill="none" stroke="#aeb7c9" stroke-width="1.3"/></svg>
<svg style="left:1536px;top:331px;" width="18" height="17" viewBox="0 0 18 17"><path d="M16 1.5 L2 8.5 L16 15.5 M2 8.5 H16" fill="none" stroke="#c2cad8" stroke-width="1.4"/></svg>
<div class="t" style="left:1557.5px;top:327.5px;font-size:19px;line-height:25px;color:#bcc4d4;letter-spacing:-0.43px;">Persp</div>
<div style="left:1658px;top:118px;width:2px;height:1376px;background:#191919;"></div>
<div style="left:1660px;top:118px;width:874px;height:29px;background:#282828;"></div>
<div style="left:1660px;top:118px;width:143px;height:29px;background:#3c3c3c;border-radius:4px 4px 0 0;border-top:3px solid #2c5d87;box-sizing:border-box;"></div>
<svg style="left:1673px;top:125px;" width="16" height="16" viewBox="0 0 16 16"><circle cx="8" cy="8" r="7.5" fill="#c4c4c4"/><rect x="6.8" y="6.8" width="2.6" height="6" fill="#3c3c3c"/><circle cx="8.1" cy="4.3" r="1.5" fill="#3c3c3c"/></svg>
<div class="t" style="left:1696.0px;top:121.5px;font-size:18.5px;line-height:24px;color:#d2d2d2;letter-spacing:0.55px;">Inspector</div>
<svg style="left:2481px;top:122px;" width="16" height="18" viewBox="0 0 16 18"><rect x="2.6" y="10.8" width="10.6" height="5.6" fill="none" stroke="#c4c4c4" stroke-width="1.5"/><path d="M12.6 10.8 V6.2 A4 4 0 0 0 5 4.6" fill="none" stroke="#c4c4c4" stroke-width="1.5"/></svg>
<svg style="left:2512px;top:122px;" width="6" height="20" viewBox="0 0 6 20"><circle cx="3" cy="4.1" r="1.7" fill="#c4c4c4"/><circle cx="3" cy="10.0" r="1.7" fill="#c4c4c4"/><circle cx="3" cy="15.9" r="1.7" fill="#c4c4c4"/></svg>
<div style="left:1660px;top:147px;width:874px;height:1347px;background:#383838;"></div>
<div style="left:1660px;top:147px;width:874px;height:116px;background:#3c3c3c;"></div>
<div style="left:1660px;top:147px;width:874px;height:1.2px;background:#242424;"></div>
<svg style="left:1669.6px;top:161.4px;" width="35.4" height="35.4" viewBox="0 0 22 22"><path d="M11 1 L20.5 5.8 L20.5 16.2 L11 21 L1.5 16.2 L1.5 5.8 Z" fill="#7fd6fd"/><path d="M1.5 5.8 L11 10.6 L20.5 5.8 M11 10.6 L11 21" fill="none" stroke="#3c3c3c" stroke-width="1.7"/></svg>
<svg style="left:1701.0px;top:193.95px;" width="10" height="6.5" viewBox="0 0 10 6.5"><path d="M0 0 L10 0 L5.0 6.5 Z" fill="#c4c4c4"/></svg>
<div style="left:1730px;top:164px;width:21px;height:21px;background:#2a2a2a;border:1px solid #1c1c1c;border-radius:4px;box-sizing:border-box;"></div>
<svg style="left:1730px;top:164px;" width="21" height="21" viewBox="0 0 21 21"><path d="M5 10.5 L9 14.5 L16 6.5" fill="none" stroke="#e4e4e4" stroke-width="2.2"/></svg>
<div style="left:1760px;top:161px;width:654px;height:27px;background:#2a2a2a;border:1px solid #212121;border-top-color:#0d0d0d;border-radius:4px;box-sizing:border-box;"></div>
<div class="t" style="left:1764.0px;top:162.5px;font-size:18.5px;line-height:24px;color:#d2d2d2;letter-spacing:0.71px;font-weight:bold;">DataManager</div>
<div style="left:2419px;top:164px;width:21px;height:21px;background:#2a2a2a;border:1px solid #1c1c1c;border-radius:4px;box-sizing:border-box;"></div>
<div class="t" style="left:2446.0px;top:162.5px;font-size:18.5px;line-height:24px;color:#d2d2d2;letter-spacing:0.62px;">Static</div>
<svg style="left:2514.5px;top:171.25px;" width="11" height="6.5" viewBox="0 0 11 6.5"><path d="M0 0 L11 0 L5.5 6.5 Z" fill="#c4c4c4"/></svg>
<div class="t" style="left:1725.0px;top:198.5px;font-size:18.5px;line-height:24px;color:#d2d2d2;letter-spacing:0.72px;">Tag</div>
<div style="left:1764px;top:198.5px;width:351px;height:25px;background:#515151;border:1px solid #272727;border-radius:4px;box-sizing:border-box;"></div>
<div class="t" style="left:1769.0px;top:198.5px;font-size:18.5px;line-height:24px;color:#d2d2d2;letter-spacing:0.72px;">Untagged</div>
<svg style="left:2096.5px;top:207.25px;" width="11" height="6.5" viewBox="0 0 11 6.5"><path d="M0 0 L11 0 L5.5 6.5 Z" fill="#c4c4c4"/></svg>
<div class="t" style="left:2136.5px;top:198.5px;font-size:18.5px;line-height:24px;color:#d2d2d2;letter-spacing:0.75px;">Layer</div>
<div style="left:2194px;top:198.5px;width:335px;height:25px;background:#515151;border:1px solid #272727;border-radius:4px;box-sizing:border-box;"></div>
<div class="t" style="left:2199.0px;top:198.5px;font-size:18.5px;line-height:24px;color:#d2d2d2;letter-spacing:0.77px;">Default</div>
<svg style="left:2509.0px;top:207.25px;" width="11" height="6.5" viewBox="0 0 11 6.5"><path d="M0 0 L11 0 L5.5 6.5 Z" fill="#c4c4c4"/></svg>
<div class="t" style="left:1682.0px;top:229.5px;font-size:18.5px;line-height:24px;color:#d2d2d2;letter-spacing:0.42px;">Prefab</div>
<div style="left:1746px;top:229px;width:231px;height:25.5px;background:#585858;border:1px solid #272727;border-radius:4px 0 0 4px;box-sizing:border-box;"></div>
<div style="left:1977px;top:229px;width:244px;height:25.5px;background:#585858;border:1px solid #272727;border-radius:0 4px 4px 0;box-sizing:border-box;"></div>
<div class="t" style="left:1837.6px;top:229.5px;font-size:18.5px;line-height:24px;color:#d2d2d2;letter-spacing:0.19px;">Open</div>
<div class="t" style="left:2070.9px;top:229.5px;font-size:18.5px;line-height:24px;color:#d2d2d2;letter-spacing:0.76px;">Select</div>
<div style="left:2240px;top:229px;width:290px;height:25.5px;background:#515151;border:1px solid #272727;border-radius:4px;box-sizing:border-box;"></div>
<div class="t" style="left:2246.0px;top:229.5px;font-size:18.5px;line-height:24px;color:#d2d2d2;letter-spacing:0.42px;">Overrides</div>
<svg style="left:2510.0px;top:238.25px;" width="11" height="6.5" viewBox="0 0 11 6.5"><path d="M0 0 L11 0 L5.5 6.5 Z" fill="#c4c4c4"/></svg>
<div style="left:1660px;top:263.2px;width:874px;height:1.2px;background:#1a1a1a;"></div>
<div style="left:1660px;top:264.3px;width:874px;height:30.7px;background:#3e3e3e;"></div>
<div style="left:1660px;top:295px;width:874px;height:1px;background:#303030;"></div>
<svg style="left:1670.0px;top:275.0px;" width="13" height="10" viewBox="0 0 13 10"><path d="M0 0 L13 0 L6.5 10 Z" fill="#6e6e6e"/></svg>
<svg style="left:1692px;top:269px;" width="24" height="22" viewBox="0 0 24 22"><path d="M11.1 2.8 V8.4" stroke="#a3e64a" stroke-width="3.5" stroke-linecap="round"/><path d="M3.9 16.3 L9 13.7" stroke="#52c0f2" stroke-width="3.5" stroke-linecap="round"/><path d="M13.3 13.7 L18.4 16.3" stroke="#f0673c" stroke-width="3.5" stroke-linecap="round"/></svg>
<div class="t" style="left:1751.5px;top:268.0px;font-size:18.5px;line-height:24px;color:#d2d2d2;letter-spacing:0.50px;font-weight:bold;">Transform</div>
<svg style="left:2447px;top:272px;" width="17" height="17" viewBox="0 0 17 17"><circle cx="8.5" cy="8.5" r="8" fill="#c4c4c4"/><text x="8.5" y="13.2" font-size="13" font-weight="bold" text-anchor="middle" fill="#3e3e3e" font-family="Liberation Sans,sans-serif">?</text></svg>
<svg style="left:2478px;top:272px;" width="18" height="17" viewBox="0 0 18 17"><path d="M1 5 H17 M1 12 H17" stroke="#c4c4c4" stroke-width="1.6"/><path d="M11 1.5 V8.5 M6 8.5 V15.5" stroke="#c4c4c4" stroke-width="1.8"/></svg>
<svg style="left:2513px;top:270px;" width="6" height="20" viewBox="0 0 6 20"><circle cx="3" cy="4.1" r="1.7" fill="#c4c4c4"/><circle cx="3" cy="10.0" r="1.7" fill="#c4c4c4"/><circle cx="3" cy="15.9" r="1.7" fill="#c4c4c4"/></svg>
<div class="t" style="left:1689.5px;top:303.5px;font-size:18.5px;line-height:24px;color:#d2d2d2;letter-spacing:0.13px;font-weight:bold;">Position</div>
<div class="t" style="left:2027.5px;top:303.5px;font-size:18.5px;line-height:24px;color:#d2d2d2;letter-spacing:0.00px;">X</div>
<div style="left:2050px;top:302.5px;width:140px;height:26px;background:#2a2a2a;border:1px solid #212121;border-top-color:#0d0d0d;border-radius:4px;box-sizing:border-box;"></div>
<div class="t" style="left:2054.0px;top:303.5px;font-size:18.5px;line-height:24px;color:#d2d2d2;letter-spacing:0.00px;font-weight:bold;">0</div>
<div class="t" style="left:2197.0px;top:303.5px;font-size:18.5px;line-height:24px;color:#d2d2d2;letter-spacing:0.00px;">Y</div>
<div style="left:2220px;top:302.5px;width:140px;height:26px;background:#2a2a2a;border:1px solid #212121;border-top-color:#0d0d0d;border-radius:4px;box-sizing:border-box;"></div>
<div class="t" style="left:2224.0px;top:303.5px;font-size:18.5px;line-height:24px;color:#d2d2d2;letter-spacing:0.00px;font-weight:bold;">0</div>
<div class="t" style="left:2367.0px;top:303.5px;font-size:18.5px;line-height:24px;color:#d2d2d2;letter-spacing:0.00px;">Z</div>
<div style="left:2390px;top:302.5px;width:141px;height:26px;background:#2a2a2a;border:1px solid #212121;border-top-color:#0d0d0d;border-radius:4px;box-sizing:border-box;"></div>
<div class="t" style="left:2394.0px;top:303.5px;font-size:18.5px;line-height:24px;color:#d2d2d2;letter-spacing:0.00px;font-weight:bold;">0</div>
<div class="t" style="left:1689.5px;top:333.5px;font-size:18.5px;line-height:24px;color:#d2d2d2;letter-spacing:0.25px;font-weight:bold;">Rotation</div>
<div class="t" style="left:2027.5px;top:333.5px;font-size:18.5px;line-height:24px;color:#d2d2d2;letter-spacing:0.00px;">X</div>
<div style="left:2050px;top:332.5px;width:140px;height:26px;background:#2a2a2a;border:1px solid #212121;border-top-color:#0d0d0d;border-radius:4px;box-sizing:border-box;"></div>
<div class="t" style="left:2054.0px;top:333.5px;font-size:18.5px;line-height:24px;color:#d2d2d2;letter-spacing:0.00px;font-weight:bold;">0</div>
<div class="t" style="left:2197.0px;top:333.5px;font-size:18.5px;line-height:24px;color:#d2d2d2;letter-spacing:0.00px;">Y</div>
<div style="left:2220px;top:332.5px;width:140px;height:26px;background:#2a2a2a;border:1px solid #212121;border-top-color:#0d0d0d;border-radius:4px;box-sizing:border-box;"></div>
<div class="t" style="left:2224.0px;top:333.5px;font-size:18.5px;line-height:24px;color:#d2d2d2;letter-spacing:0.00px;font-weight:bold;">0</div>
<div class="t" style="left:2367.0px;top:333.5px;font-size:18.5px;line-height:24px;color:#d2d2d2;letter-spacing:0.00px;">Z</div>
<div style="left:2390px;top:332.5px;width:141px;height:26px;background:#2a2a2a;border:1px solid #212121;border-top-color:#0d0d0d;border-radius:4px;box-sizing:border-box;"></div>
<div class="t" style="left:2394.0px;top:333.5px;font-size:18.5px;line-height:24px;color:#d2d2d2;letter-spacing:0.00px;font-weight:bold;">0</div>
<div class="t" style="left:1689.5px;top:363.5px;font-size:18.5px;line-height:24px;color:#d2d2d2;letter-spacing:0.74px;">Scale</div>
<div class="t" style="left:2027.5px;top:363.5px;font-size:18.5px;line-height:24px;color:#d2d2d2;letter-spacing:0.00px;">X</div>
<div style="left:2050px;top:362.5px;width:140px;height:26px;background:#2a2a2a;border:1px solid #212121;border-top-color:#0d0d0d;border-radius:4px;box-sizing:border-box;"></div>
<div class="t" style="left:2054.0px;top:363.5px;font-size:18.5px;line-height:24px;color:#d2d2d2;letter-spacing:0.00px;">1</div>
<div class="t" style="left:2197.0px;top:363.5px;font-size:18.5px;line-height:24px;color:#d2d2d2;letter-spacing:0.00px;">Y</div>
<div style="left:2220px;top:362.5px;width:140px;height:26px;background:#2a2a2a;border:1px solid #212121;border-top-color:#0d0d0d;border-radius:4px;box-sizing:border-box;"></div>
<div class="t" style="left:2224.0px;top:363.5px;font-size:18.5px;line-height:24px;color:#d2d2d2;letter-spacing:0.00px;">1</div>
<div class="t" style="left:2367.0px;top:363.5px;font-size:18.5px;line-height:24px;color:#d2d2d2;letter-spacing:0.00px;">Z</div>
<div style="left:2390px;top:362.5px;width:141px;height:26px;background:#2a2a2a;border:1px solid #212121;border-top-color:#0d0d0d;border-radius:4px;box-sizing:border-box;"></div>
<div class="t" style="left:2394.0px;top:363.5px;font-size:18.5px;line-height:24px;color:#d2d2d2;letter-spacing:0.00px;">1</div>
<svg style="left:1992px;top:366px;" width="22" height="18" viewBox="0 0 22 18"><path d="M8.5 5 H6.5 A4.2 4.2 0 0 0 6.5 13.4 H8.5 M13 5 H15 A4.2 4.2 0 0 1 15 13.4 H13" fill="none" stroke="#c4c4c4" stroke-width="1.6"/><path d="M3 1.5 L18.5 17" stroke="#c4c4c4" stroke-width="1.5"/></svg>
<div style="left:1660px;top:402.7px;width:874px;height:1.2px;background:#1a1a1a;"></div>
<div style="left:1660px;top:403.8px;width:874px;height:30.7px;background:#3e3e3e;"></div>
<div style="left:1660px;top:434.5px;width:874px;height:1px;background:#303030;"></div>
<svg style="left:1670.0px;top:414.5px;" width="13" height="10" viewBox="0 0 13 10"><path d="M0 0 L13 0 L6.5 10 Z" fill="#6e6e6e"/></svg>
<svg style="left:1694px;top:409.3px;" width="18.1" height="21" viewBox="0 0 16 20" preserveAspectRatio="none"><path d="M0.5 0.5 L10.8 0.5 L15.5 5.2 L15.5 19.5 L0.5 19.5 Z" fill="#e8e8e8" opacity="1.0"/><text x="7.9" y="16" font-size="14.5" font-weight="bold" text-anchor="middle" fill="#2c7a36" font-family="Liberation Sans,sans-serif" opacity="1.0">#</text></svg>
<div class="t" style="left:1751.5px;top:407.5px;font-size:18.5px;line-height:24px;color:#d2d2d2;letter-spacing:0.71px;font-weight:bold;">Data Manager (Script)</div>
<svg style="left:2447px;top:411.5px;" width="17" height="17" viewBox="0 0 17 17"><circle cx="8.5" cy="8.5" r="8" fill="#c4c4c4"/><text x="8.5" y="13.2" font-size="13" font-weight="bold" text-anchor="middle" fill="#3e3e3e" font-family="Liberation Sans,sans-serif">?</text></svg>
<svg style="left:2478px;top:411.5px;" width="18" height="17" viewBox="0 0 18 17"><path d="M1 5 H17 M1 12 H17" stroke="#c4c4c4" stroke-width="1.6"/><path d="M11 1.5 V8.5 M6 8.5 V15.5" stroke="#c4c4c4" stroke-width="1.8"/></svg>
<svg style="left:2513px;top:409.5px;" width="6" height="20" viewBox="0 0 6 20"><circle cx="3" cy="4.1" r="1.7" fill="#c4c4c4"/><circle cx="3" cy="10.0" r="1.7" fill="#c4c4c4"/><circle cx="3" cy="15.9" r="1.7" fill="#c4c4c4"/></svg>
<div class="t" style="left:1689.5px;top:444.0px;font-size:18.5px;line-height:24px;color:#8c8c8c;letter-spacing:0.62px;">Script</div>
<div style="left:2026px;top:443px;width:504px;height:26px;background:#303030;border:1px solid #212121;border-top-color:#0d0d0d;border-radius:4px;box-sizing:border-box;"></div>
<svg style="left:2032px;top:447px;" width="14.6" height="17" viewBox="0 0 16 20" preserveAspectRatio="none"><path d="M0.5 0.5 L10.8 0.5 L15.5 5.2 L15.5 19.5 L0.5 19.5 Z" fill="#e8e8e8" opacity="0.55"/><text x="7.9" y="16" font-size="14.5" font-weight="bold" text-anchor="middle" fill="#2c7a36" font-family="Liberation Sans,sans-serif" opacity="0.55">#</text></svg>
<div class="t" style="left:2049.0px;top:444.5px;font-size:18.5px;line-height:24px;color:#8a8a8a;letter-spacing:0.72px;">DataManager</div>
<div style="left:2500px;top:444px;width:29px;height:24px;background:#353535;border-radius:0 3px 3px 0;"></div>
<svg style="left:2506px;top:447px;" width="18" height="18" viewBox="0 0 18 18"><circle cx="9" cy="9" r="6.8" fill="none" stroke="#9a9a9a" stroke-width="1.5"/><circle cx="9" cy="9" r="2.4" fill="#9a9a9a"/></svg>
<div class="t" style="left:1689.5px;top:488.0px;font-size:18.5px;line-height:24px;color:#d2d2d2;letter-spacing:0.36px;font-weight:bold;">Base Settings</div>
<div class="t" style="left:1689.5px;top:514.5px;font-size:18.5px;line-height:24px;color:#d2d2d2;letter-spacing:0.64px;">Connection String</div>
<div style="left:2026px;top:513.5px;width:504px;height:26px;background:#2a2a2a;border:1px solid #212121;border-top-color:#0d0d0d;border-radius:4px;box-sizing:border-box;"></div>
<div class="t" style="left:1689.5px;top:544.5px;font-size:18.5px;line-height:24px;color:#d2d2d2;letter-spacing:0.41px;">Project Name</div>
<div style="left:2026px;top:543.5px;width:504px;height:26px;background:#2a2a2a;border:1px solid #212121;border-top-color:#0d0d0d;border-radius:4px;box-sizing:border-box;"></div>
<div class="t" style="left:2030.0px;top:544.5px;font-size:18.5px;line-height:24px;color:#d2d2d2;letter-spacing:0.70px;">MyAzurePowerToolsProject</div>
<div class="t" style="left:1689.5px;top:588.0px;font-size:18.5px;line-height:24px;color:#d2d2d2;letter-spacing:0.57px;font-weight:bold;">Table Settings</div>
<div class="t" style="left:1689.5px;top:615.0px;font-size:18.5px;line-height:24px;color:#d2d2d2;letter-spacing:0.56px;">Projects Table Name</div>
<div style="left:2026px;top:614px;width:504px;height:26px;background:#2a2a2a;border:1px solid #212121;border-top-color:#0d0d0d;border-radius:4px;box-sizing:border-box;"></div>
<div class="t" style="left:2030.0px;top:615.0px;font-size:18.5px;line-height:24px;color:#d2d2d2;letter-spacing:0.65px;">projects</div>
<div class="t" style="left:1689.5px;top:645.0px;font-size:18.5px;line-height:24px;color:#d2d2d2;letter-spacing:0.67px;">Tracked Objects Table Name</div>
<div style="left:2026px;top:644px;width:504px;height:26px;background:#2a2a2a;border:1px solid #212121;border-top-color:#0d0d0d;border-radius:4px;box-sizing:border-box;"></div>
<div class="t" style="left:2030.0px;top:645.0px;font-size:18.5px;line-height:24px;color:#d2d2d2;letter-spacing:0.77px;">objects</div>
<div class="t" style="left:1689.5px;top:675.0px;font-size:18.5px;line-height:24px;color:#d2d2d2;letter-spacing:0.39px;">Partition Key</div>
<div style="left:2026px;top:674px;width:504px;height:26px;background:#2a2a2a;border:1px solid #212121;border-top-color:#0d0d0d;border-radius:4px;box-sizing:border-box;"></div>
<div class="t" style="left:2030.0px;top:675.0px;font-size:18.5px;line-height:24px;color:#d2d2d2;letter-spacing:0.23px;">main</div>
<div class="t" style="left:1689.5px;top:704.5px;font-size:18.5px;line-height:24px;color:#d2d2d2;letter-spacing:0.57px;">Try Create Table On Start</div>
<div style="left:2026px;top:706.0px;width:21px;height:21px;background:#2a2a2a;border:1px solid #1c1c1c;border-radius:4px;box-sizing:border-box;"></div>
<svg style="left:2026px;top:706.0px;" width="21" height="21" viewBox="0 0 21 21"><path d="M5 10.5 L9 14.5 L16 6.5" fill="none" stroke="#e4e4e4" stroke-width="2.2"/></svg>
<div class="t" style="left:1689.5px;top:749.0px;font-size:18.5px;line-height:24px;color:#d2d2d2;letter-spacing:0.21px;font-weight:bold;">Blob Settings</div>
<div class="t" style="left:1689.5px;top:776.0px;font-size:18.5px;line-height:24px;color:#d2d2d2;letter-spacing:0.51px;">Block Blob Container Name</div>
<div style="left:2026px;top:775px;width:504px;height:26px;background:#2a2a2a;border:1px solid #212121;border-top-color:#0d0d0d;border-radius:4px;box-sizing:border-box;"></div>
<div class="t" style="left:2030.0px;top:776.0px;font-size:18.5px;line-height:24px;color:#d2d2d2;letter-spacing:0.88px;">tracked-objects-thumbnails</div>
<div class="t" style="left:1689.5px;top:805.5px;font-size:18.5px;line-height:24px;color:#d2d2d2;letter-spacing:0.45px;">Try Create Blob Container On Start</div>
<div style="left:2026px;top:807.0px;width:21px;height:21px;background:#2a2a2a;border:1px solid #1c1c1c;border-radius:4px;box-sizing:border-box;"></div>
<svg style="left:2026px;top:807.0px;" width="21" height="21" viewBox="0 0 21 21"><path d="M5 10.5 L9 14.5 L16 6.5" fill="none" stroke="#e4e4e4" stroke-width="2.2"/></svg>
<div class="t" style="left:1689.5px;top:848.5px;font-size:18.5px;line-height:24px;color:#d2d2d2;letter-spacing:0.22px;font-weight:bold;">Events</div>
<div style="left:1689px;top:875px;width:841px;height:115px;background:#4d4d4d;border:1px solid #242424;border-radius:4px;box-sizing:border-box;"></div>
<div style="left:1690px;top:876px;width:839px;height:28px;background:#353535;border-radius:3px 3px 0 0;"></div>
<div style="left:1690px;top:904px;width:839px;height:1px;background:#242424;"></div>
<div style="left:1690px;top:905px;width:839px;height:5px;background:#454545;"></div>
<div style="left:1690px;top:984px;width:839px;height:5px;background:#414141;border-radius:0 0 3px 3px;"></div>
<div class="t" style="left:1700.0px;top:877.5px;font-size:18.5px;line-height:24px;color:#d2d2d2;letter-spacing:0.49px;font-weight:bold;">On Data Manager Ready ()</div>
<div style="left:1697px;top:922px;width:15px;height:1.3px;background:#606060;"></div>
<div style="left:1697px;top:926.5px;width:15px;height:1.3px;background:#606060;"></div>
<div style="left:1720px;top:916px;width:239px;height:26px;background:#515151;border:1px solid #272727;border-radius:4px;box-sizing:border-box;"></div>
<div class="t" style="left:1725.0px;top:916.5px;font-size:18.5px;line-height:24px;color:#d2d2d2;letter-spacing:0.33px;">Runtime Only</div>
<svg style="left:1938.5px;top:924.75px;" width="11" height="6.5" viewBox="0 0 11 6.5"><path d="M0 0 L11 0 L5.5 6.5 Z" fill="#c4c4c4"/></svg>
<div style="left:1968px;top:916px;width:551px;height:26px;background:#515151;border:1px solid #272727;border-radius:4px;box-sizing:border-box;"></div>
<div class="t" style="left:1973.5px;top:916.5px;font-size:18.5px;line-height:24px;color:#d2d2d2;letter-spacing:0.31px;font-weight:bold;">SceneController.Init</div>
<svg style="left:2498.5px;top:924.75px;" width="11" height="6.5" viewBox="0 0 11 6.5"><path d="M0 0 L11 0 L5.5 6.5 Z" fill="#c4c4c4"/></svg>
<div style="left:1720px;top:945.5px;width:239px;height:26.5px;background:#2a2a2a;border:1px solid #212121;border-top-color:#0d0d0d;border-radius:4px;box-sizing:border-box;"></div>
<svg style="left:1726px;top:949.5px;" width="15.0" height="17.5" viewBox="0 0 16 20" preserveAspectRatio="none"><path d="M0.5 0.5 L10.8 0.5 L15.5 5.2 L15.5 19.5 L0.5 19.5 Z" fill="#e8e8e8" opacity="1.0"/><text x="7.9" y="16" font-size="14.5" font-weight="bold" text-anchor="middle" fill="#2c7a36" font-family="Liberation Sans,sans-serif" opacity="1.0">#</text></svg>
<div style="left:1743px;top:946px;width:189px;height:26px;overflow:hidden;">
<div class="t" style="left:0.5px;top:1.5px;font-size:18.5px;line-height:24px;color:#d2d2d2;letter-spacing:0.44px;font-weight:bold;">SceneController (Sce</div>
</div>
<div style="left:1931px;top:946.5px;width:27px;height:24.5px;background:#3a3a3a;border-radius:0 3px 3px 0;"></div>
<svg style="left:1935px;top:949.5px;" width="18" height="18" viewBox="0 0 18 18"><circle cx="9" cy="9" r="6.8" fill="none" stroke="#d0d0d0" stroke-width="1.5"/><circle cx="9" cy="9" r="2.4" fill="#d0d0d0"/></svg>
<div style="left:2429px;top:989px;width:86px;height:28px;background:#383838;border:1px solid #242424;border-top:none;border-radius:0 0 4px 4px;box-sizing:border-box;"></div>
<svg style="left:2444px;top:994px;" width="17" height="17" viewBox="0 0 17 17"><path d="M8.5 1.5 V15.5 M1.5 8.5 H15.5" stroke="#d0d0d0" stroke-width="1.8"/></svg>
<div style="left:2483px;top:1001.8px;width:13.5px;height:1.8px;background:#d0d0d0;"></div>
<div style="left:1661px;top:875px;width:3px;height:29px;background:#0f81be;"></div>
<div style="left:1661px;top:915px;width:3px;height:27px;background:#0f81be;"></div>
<div style="left:1661px;top:945px;width:3px;height:27px;background:#0f81be;"></div>
<div style="left:1689px;top:1024px;width:841px;height:112px;background:#414141;border:1px solid #242424;border-radius:4px;box-sizing:border-box;"></div>
<div style="left:1690px;top:1025px;width:839px;height:27px;background:#353535;border-radius:3px 3px 0 0;"></div>
<div style="left:1690px;top:1052px;width:839px;height:1px;background:#242424;"></div>
<div class="t" style="left:1700.0px;top:1026.5px;font-size:18.5px;line-height:24px;color:#d2d2d2;letter-spacing:0.47px;">On Data Manager Init Failed ()</div>
<div class="t" style="left:1700.0px;top:1083.0px;font-size:18.5px;line-height:24px;color:#d2d2d2;letter-spacing:0.24px;">List is Empty</div>
<div style="left:2429px;top:1135px;width:86px;height:28px;background:#383838;border:1px solid #242424;border-top:none;border-radius:0 0 4px 4px;box-sizing:border-box;"></div>
<svg style="left:2444px;top:1139.5px;" width="17" height="17" viewBox="0 0 17 17"><path d="M8.5 1.5 V15.5 M1.5 8.5 H15.5" stroke="#d0d0d0" stroke-width="1.8"/></svg>
<div style="left:2483px;top:1147.3px;width:13.5px;height:1.8px;background:#6a6a6a;"></div>
<div style="left:1660px;top:1178px;width:874px;height:1.3px;background:#1a1a1a;"></div>
<div style="left:1927px;top:1193px;width:344px;height:34px;background:#585858;border:1px solid #272727;border-radius:4px;box-sizing:border-box;"></div>
<div class="t" style="left:2028.7px;top:1198.0px;font-size:18.5px;line-height:24px;color:#d2d2d2;letter-spacing:0.49px;">Add Component</div>
<div style="left:2377px;top:1497px;width:1.6px;height:25px;background:#232323;"></div>
<div style="left:2416.5px;top:1497px;width:1.6px;height:25px;background:#232323;"></div>
<div style="left:2456px;top:1497px;width:1.6px;height:25px;background:#232323;"></div>
<div style="left:2495.5px;top:1497px;width:1.6px;height:25px;background:#232323;"></div>
<svg style="left:2383px;top:1500px;" width="26" height="24" viewBox="0 0 26 24"><ellipse cx="12.3" cy="13.5" rx="6.3" ry="10" fill="#ffc20a"/><circle cx="12.3" cy="5.2" r="3.6" fill="#ffc20a"/><path d="M8.6 4.6 L6.2 1.6 M16 4.6 L18.6 1.6 M7.5 9.5 L4 6.8 L3.4 4 M17.2 9.5 L20.6 6.8 L21.6 4 M6.5 14.5 L3 15.5 L2 18 M7 19.5 L4 22.5" stroke="#ffc20a" stroke-width="2" fill="none" stroke-linecap="round"/><circle cx="17" cy="17.5" r="5.2" fill="#191919"/><path d="M15.8 11.6 H18.6 L18.1 18.6 H16.3Z" fill="#ffc20a"/><rect x="15.9" y="20" width="2.6" height="2.6" fill="#ffc20a"/></svg>
<svg style="left:2424px;top:1500px;" width="26" height="24" viewBox="0 0 26 24"><ellipse cx="13" cy="6" rx="9.2" ry="4.2" fill="#c8c8c8"/><path d="M3.8 9.5 Q13 15 22.2 9.5 V13.3 Q13 18.8 3.8 13.3Z" fill="#c8c8c8"/><path d="M3.8 16.3 Q13 21.8 22.2 16.3 V20.3 Q13 25.8 3.8 20.3Z" fill="#c8c8c8"/><path d="M4.4 3.4 L24 24.5" stroke="#191919" stroke-width="4.4"/><path d="M3.4 1.8 L23.2 23" stroke="#c8c8c8" stroke-width="1.7"/></svg>
<svg style="left:2464px;top:1500px;" width="26" height="24" viewBox="0 0 26 24"><path d="M3.6 11 A9.4 9.4 0 0 1 19.5 4.8 M21.4 13.5 A9.4 9.4 0 0 1 6 19.6" fill="none" stroke="#c8c8c8" stroke-width="1.8"/><path d="M21 0.8 L20.6 6.4 L15.2 5.2Z M4 23.2 L4.6 17.6 L9.8 19.2Z" fill="#c8c8c8"/><circle cx="13" cy="10.5" r="4.8" fill="#c8c8c8"/><path d="M10.6 15.4 H15.4 V17.4 A2.4 2.2 0 0 1 10.6 17.4Z" fill="#c8c8c8"/><path d="M5.6 3 L22.8 24" stroke="#191919" stroke-width="4.2"/><path d="M4.6 1.6 L22.2 22.8" stroke="#c8c8c8" stroke-width="1.7"/></svg>
<svg style="left:2503px;top:1500px;" width="24" height="24" viewBox="0 0 24 24"><circle cx="12" cy="12" r="10.2" fill="none" stroke="#c8c8c8" stroke-width="1.5"/><path d="M7.4 12.4 L10.8 15.6 L16.6 9.2" fill="none" stroke="#c8c8c8" stroke-width="2.4"/></svg>
<div style="left:0px;top:824px;width:1658px;height:29px;background:#282828;border-radius:0 5px 0 0;"></div>
<div style="left:0px;top:824px;width:119px;height:29px;background:#3c3c3c;border-radius:4px 4px 0 0;"></div>
<svg style="left:7px;top:831.5px;" width="19" height="16" viewBox="0 0 19 16"><path d="M0.5 1.5 Q0.5 0.5 1.5 0.5 L7 0.5 L9 3 L17.5 3 Q18.5 3 18.5 4 L18.5 14.5 Q18.5 15.5 17.5 15.5 L1.5 15.5 Q0.5 15.5 0.5 14.5 Z" fill="#c4c4c4"/></svg>
<div class="t" style="left:32.5px;top:827.5px;font-size:18.5px;line-height:24px;color:#d2d2d2;letter-spacing:0.63px;">Project</div>
<svg style="left:134px;top:829px;" width="17" height="18" viewBox="0 0 17 18"><path d="M0.8 0.8 H15.5 V16.5 H0.8Z" fill="#c4c4c4"/><path d="M3 4 H13.5 M3 7.5 H13.5 M3 11 H13.5" stroke="#282828" stroke-width="1.5"/><rect x="3" y="13.2" width="5" height="1.4" fill="#282828"/></svg>
<div class="t" style="left:157.0px;top:827.5px;font-size:18.5px;line-height:24px;color:#d2d2d2;letter-spacing:0.45px;">Console</div>
<svg style="left:267px;top:829px;" width="18" height="18" viewBox="0 0 18 18"><path d="M3 1 V17 M9 1 V17 M15 1 V17" stroke="#c4c4c4" stroke-width="1.4"/><rect x="0.8" y="8.5" width="4.4" height="3.6" fill="#c4c4c4"/><rect x="6.8" y="3.5" width="4.4" height="3.6" fill="#c4c4c4"/><rect x="12.8" y="7" width="4.4" height="3.6" fill="#c4c4c4"/></svg>
<div class="t" style="left:292.5px;top:827.5px;font-size:18.5px;line-height:24px;color:#d2d2d2;letter-spacing:0.48px;">Audio Mixer</div>
<svg style="left:1604px;top:829px;" width="16" height="18" viewBox="0 0 16 18"><rect x="2.6" y="10.8" width="10.6" height="5.6" fill="none" stroke="#c4c4c4" stroke-width="1.5"/><path d="M12.6 10.8 V6.2 A4 4 0 0 0 5 4.6" fill="none" stroke="#c4c4c4" stroke-width="1.5"/></svg>
<svg style="left:1635px;top:828px;" width="6" height="20" viewBox="0 0 6 20"><circle cx="3" cy="4.1" r="1.7" fill="#c4c4c4"/><circle cx="3" cy="10.0" r="1.7" fill="#c4c4c4"/><circle cx="3" cy="15.9" r="1.7" fill="#c4c4c4"/></svg>
<div style="left:0px;top:853px;width:1658px;height:31px;background:#3c3c3c;"></div>
<div style="left:0px;top:884px;width:1658px;height:1px;background:#232323;"></div>
<svg style="left:7px;top:858px;" width="20" height="20" viewBox="0 0 20 20"><path d="M10 1 V19 M1 10 H19" stroke="#c4c4c4" stroke-width="2.8"/></svg>
<svg style="left:33.0px;top:865.0px;" width="10" height="6" viewBox="0 0 10 6"><path d="M0 0 L10 0 L5.0 6 Z" fill="#c4c4c4"/></svg>
<div style="left:995px;top:856px;width:477px;height:24px;background:#2a2a2a;border:1px solid #1b1b1b;border-radius:7px;box-sizing:border-box;"></div>
<div style="left:1445px;top:857px;width:1px;height:22px;background:#3c3c3c;"></div>
<svg style="left:1002px;top:863px;" width="14" height="14" viewBox="0 0 14 14"><circle cx="5" cy="5" r="3.3" fill="none" stroke="#c4c4c4" stroke-width="1.6"/><path d="M7.5 7.5 L11.5 11.5" stroke="#c4c4c4" stroke-width="2"/></svg>
<svg style="left:1448px;top:858px;" width="20" height="20" viewBox="0 0 20 20"><rect x="6.5" y="1.5" width="12" height="12" rx="2" fill="none" stroke="#b4b4b4" stroke-width="1.4"/><rect x="1.5" y="12.5" width="6" height="6" fill="#2a2a2a" stroke="#b4b4b4" stroke-width="1.4"/><path d="M8.5 11.5 L15 5 M10.5 4.8 L15.2 4.8 L15.2 9.5" fill="none" stroke="#b4b4b4" stroke-width="1.4"/></svg>
<div style="left:1476px;top:853px;width:1.3px;height:30px;background:#2c2c2c;"></div>
<div style="left:1515px;top:853px;width:1.3px;height:30px;background:#2c2c2c;"></div>
<div style="left:1554px;top:853px;width:1.3px;height:30px;background:#2c2c2c;"></div>
<div style="left:1557px;top:853px;width:1.3px;height:30px;background:#2c2c2c;"></div>
<div style="left:1594px;top:853px;width:1.3px;height:30px;background:#2c2c2c;"></div>
<svg style="left:1485px;top:857px;" width="20" height="21" viewBox="0 0 20 21"><rect x="2" y="0.5" width="8.5" height="8.5" fill="#c4c4c4"/><circle cx="5.8" cy="14.5" r="5.6" fill="#c4c4c4" stroke="#3c3c3c" stroke-width="1"/><path d="M14 4.5 L19.5 14 H9.5Z" fill="#c4c4c4" stroke="#3c3c3c" stroke-width="1"/></svg>
<svg style="left:1524px;top:859px;transform:rotate(-4deg);" width="20" height="18" viewBox="0 0 20 18"><path d="M1 9.5 L9.5 2 L17.5 1 L16.5 9 L8 16.5 Z" fill="#c4c4c4"/><circle cx="14" cy="4.5" r="1.3" fill="#3c3c3c"/></svg>
<svg style="left:1563px;top:858px;" width="21" height="20" viewBox="0 0 21 20"><path d="M10.5 0.8 L13.2 7.2 L20.2 7.8 L14.9 12.4 L16.5 19.2 L10.5 15.6 L4.5 19.2 L6.1 12.4 L0.8 7.8 L7.8 7.2Z" fill="#8a8a8a"/></svg>
<svg style="left:1602px;top:858px;" width="24" height="20" viewBox="0 0 24 20"><path d="M1.8 10.2 Q12 0.8 22.2 10.2 Q12 19.6 1.8 10.2Z" fill="none" stroke="#c4c4c4" stroke-width="2.0"/><circle cx="12" cy="10.2" r="3.2" fill="#c4c4c4"/><path d="M3.5 18.8 L20.5 1.2" stroke="#c4c4c4" stroke-width="2.2"/></svg>
<div class="t" style="left:1627.0px;top:856.5px;font-size:18.5px;line-height:24px;color:#d2d2d2;letter-spacing:0.21px;">24</div>
<div style="left:0px;top:885px;width:622px;height:609px;background:#383838;"></div>
<div style="left:622px;top:885px;width:20px;height:609px;background:#353535;"></div>
<div style="left:641px;top:885px;width:1px;height:609px;background:#1f1f1f;"></div>
<div style="left:642px;top:885px;width:1016px;height:31px;background:#414141;"></div>
<div style="left:642px;top:916px;width:1016px;height:547px;background:#333333;"></div>
<div style="left:642px;top:1463px;width:1016px;height:31px;background:#414141;"></div>
<div style="left:642px;top:1463px;width:1016px;height:1px;background:#2a2a2a;"></div>
<svg style="left:626.8px;top:893px;" width="11" height="7.5" viewBox="0 0 11 7.5"><path d="M0 7 L5.2 0.3 L10.4 7Z" fill="#c4c4c4"/></svg>
<svg style="left:626.8px;top:1479.5px;" width="11" height="7.5" viewBox="0 0 11 7.5"><path d="M0 0.3 L5.2 7 L10.4 0.3Z" fill="#c4c4c4"/></svg>
<div style="left:625px;top:919px;width:15px;height:125px;background:#5f5f5f;border-radius:7.5px;"></div>
<svg style="left:45px;top:886px;" width="20" height="20" viewBox="0 0 20 20"><circle cx="8" cy="8" r="6.2" fill="none" stroke="#c4c4c4" stroke-width="1.4"/><path d="M12.5 12.5 L18 18" stroke="#c4c4c4" stroke-width="2.2"/></svg>
<div class="t" style="left:70.0px;top:883.5px;font-size:18.5px;line-height:24px;color:#d2d2d2;letter-spacing:0.32px;">All Prefabs</div>
<div style="left:0;top:885px;width:622px;height:609px;overflow:hidden;">
<svg style="left:25px;top:49.7px;" width="22" height="16" viewBox="0 0 22 16"><path d="M1 15 L1 1.5 Q1 0.8 1.8 0.8 L7 0.8 L9 3.2 L16.5 3.2 Q17.3 3.2 17.3 4 L17.3 6" fill="none" stroke="#c2c2c2" stroke-width="1.5"/><path d="M4.6 6.5 L21.5 6.5 L17.8 15.5 L0.8 15.5 Z" fill="#c2c2c2"/></svg>
<svg style="left:4.25px;top:53.55px;" width="12.5" height="10.5" viewBox="0 0 12.5 10.5"><path d="M0 0 L12.5 0 L6.25 10.5 Z" fill="#6e6e6e"/></svg>
<div class="t" style="left:49.3px;top:45.0px;font-size:18.5px;line-height:24px;color:#d2d2d2;letter-spacing:0.89px;font-weight:bold;">Assets</div>
<svg style="left:46px;top:73.7px;" width="22" height="16" viewBox="0 0 22 16"><path d="M1 15 L1 1.5 Q1 0.8 1.8 0.8 L7 0.8 L9 3.2 L16.5 3.2 Q17.3 3.2 17.3 4 L17.3 6" fill="none" stroke="#c2c2c2" stroke-width="1.5"/><path d="M4.6 6.5 L21.5 6.5 L17.8 15.5 L0.8 15.5 Z" fill="#c2c2c2"/></svg>
<svg style="left:25.25px;top:77.55px;" width="12.5" height="10.5" viewBox="0 0 12.5 10.5"><path d="M0 0 L12.5 0 L6.25 10.5 Z" fill="#6e6e6e"/></svg>
<div class="t" style="left:70.3px;top:69.0px;font-size:18.5px;line-height:24px;color:#d2d2d2;letter-spacing:0.21px;">Azure Storage</div>
<svg style="left:67px;top:97.7px;" width="19" height="16" viewBox="0 0 19 16"><path d="M0.5 1.5 Q0.5 0.5 1.5 0.5 L7 0.5 L9 3 L17.5 3 Q18.5 3 18.5 4 L18.5 14.5 Q18.5 15.5 17.5 15.5 L1.5 15.5 Q0.5 15.5 0.5 14.5 Z" fill="#c2c2c2"/></svg>
<div class="t" style="left:91.3px;top:93.0px;font-size:18.5px;line-height:24px;color:#d2d2d2;letter-spacing:0.48px;">Plugins</div>
<svg style="left:46px;top:121.69999999999999px;" width="19" height="16" viewBox="0 0 19 16"><path d="M0.5 1.5 Q0.5 0.5 1.5 0.5 L7 0.5 L9 3 L17.5 3 Q18.5 3 18.5 4 L18.5 14.5 Q18.5 15.5 17.5 15.5 L1.5 15.5 Q0.5 15.5 0.5 14.5 Z" fill="#c2c2c2"/></svg>
<svg style="left:26.4px;top:123.85px;" width="10.8" height="13.5" viewBox="0 0 10.8 13.5"><path d="M0 0 L10.8 6.75 L0 13.5 Z" fill="#6e6e6e"/></svg>
<div class="t" style="left:70.3px;top:117.0px;font-size:18.5px;line-height:24px;color:#d2d2d2;letter-spacing:0.35px;">AzureSpatialAnchors.SDK</div>
<svg style="left:46px;top:145.7px;" width="19" height="16" viewBox="0 0 19 16"><path d="M0.5 1.5 Q0.5 0.5 1.5 0.5 L7 0.5 L9 3 L17.5 3 Q18.5 3 18.5 4 L18.5 14.5 Q18.5 15.5 17.5 15.5 L1.5 15.5 Q0.5 15.5 0.5 14.5 Z" fill="#c2c2c2"/></svg>
<div class="t" style="left:70.3px;top:141.0px;font-size:18.5px;line-height:24px;color:#d2d2d2;letter-spacing:0.66px;">Materials</div>
<svg style="left:46px;top:169.7px;" width="19" height="16" viewBox="0 0 19 16"><path d="M0.5 1.5 Q0.5 0.5 1.5 0.5 L7 0.5 L9 3 L17.5 3 Q18.5 3 18.5 4 L18.5 14.5 Q18.5 15.5 17.5 15.5 L1.5 15.5 Q0.5 15.5 0.5 14.5 Z" fill="#c2c2c2"/></svg>
<svg style="left:26.4px;top:171.85px;" width="10.8" height="13.5" viewBox="0 0 10.8 13.5"><path d="M0 0 L10.8 6.75 L0 13.5 Z" fill="#6e6e6e"/></svg>
<div class="t" style="left:70.3px;top:165.0px;font-size:18.5px;line-height:24px;color:#d2d2d2;letter-spacing:0.58px;">Microsoft.SpatialAudio.Spatializer.Unity</div>
<svg style="left:46px;top:193.7px;" width="19" height="16" viewBox="0 0 19 16"><path d="M0.5 1.5 Q0.5 0.5 1.5 0.5 L7 0.5 L9 3 L17.5 3 Q18.5 3 18.5 4 L18.5 14.5 Q18.5 15.5 17.5 15.5 L1.5 15.5 Q0.5 15.5 0.5 14.5 Z" fill="#c2c2c2"/></svg>
<div class="t" style="left:70.3px;top:189.0px;font-size:18.5px;line-height:24px;color:#d2d2d2;letter-spacing:0.73px;">MixedRealityToolkit.Generated</div>
<svg style="left:46px;top:217.7px;" width="19" height="16" viewBox="0 0 19 16"><path d="M0.5 1.5 Q0.5 0.5 1.5 0.5 L7 0.5 L9 3 L17.5 3 Q18.5 3 18.5 4 L18.5 14.5 Q18.5 15.5 17.5 15.5 L1.5 15.5 Q0.5 15.5 0.5 14.5 Z" fill="#c2c2c2"/></svg>
<svg style="left:26.4px;top:219.85px;" width="10.8" height="13.5" viewBox="0 0 10.8 13.5"><path d="M0 0 L10.8 6.75 L0 13.5 Z" fill="#6e6e6e"/></svg>
<div class="t" style="left:70.3px;top:213.0px;font-size:18.5px;line-height:24px;color:#d2d2d2;letter-spacing:-0.02px;">MRTK</div>
<svg style="left:46px;top:241.7px;" width="19" height="16" viewBox="0 0 19 16"><path d="M0.5 1.5 Q0.5 0.5 1.5 0.5 L7 0.5 L9 3 L17.5 3 Q18.5 3 18.5 4 L18.5 14.5 Q18.5 15.5 17.5 15.5 L1.5 15.5 Q0.5 15.5 0.5 14.5 Z" fill="#c2c2c2"/></svg>
<div class="t" style="left:70.3px;top:237.0px;font-size:18.5px;line-height:24px;color:#d2d2d2;letter-spacing:0.31px;">MRTK.Generated</div>
<svg style="left:46px;top:265.7px;" width="22" height="16" viewBox="0 0 22 16"><path d="M1 15 L1 1.5 Q1 0.8 1.8 0.8 L7 0.8 L9 3.2 L16.5 3.2 Q17.3 3.2 17.3 4 L17.3 6" fill="none" stroke="#c2c2c2" stroke-width="1.5"/><path d="M4.6 6.5 L21.5 6.5 L17.8 15.5 L0.8 15.5 Z" fill="#c2c2c2"/></svg>
<svg style="left:25.25px;top:269.55px;" width="12.5" height="10.5" viewBox="0 0 12.5 10.5"><path d="M0 0 L12.5 0 L6.25 10.5 Z" fill="#6e6e6e"/></svg>
<div class="t" style="left:70.3px;top:261.0px;font-size:18.5px;line-height:24px;color:#d2d2d2;letter-spacing:0.48px;">MRTK.Tutorials.AzureCloudServices</div>
<svg style="left:67px;top:289.7px;" width="19" height="16" viewBox="0 0 19 16"><path d="M0.5 1.5 Q0.5 0.5 1.5 0.5 L7 0.5 L9 3 L17.5 3 Q18.5 3 18.5 4 L18.5 14.5 Q18.5 15.5 17.5 15.5 L1.5 15.5 Q0.5 15.5 0.5 14.5 Z" fill="#c2c2c2"/></svg>
<div class="t" style="left:91.3px;top:285.0px;font-size:18.5px;line-height:24px;color:#d2d2d2;letter-spacing:0.66px;">Materials</div>
<svg style="left:67px;top:313.7px;" width="19" height="16" viewBox="0 0 19 16"><path d="M0.5 1.5 Q0.5 0.5 1.5 0.5 L7 0.5 L9 3 L17.5 3 Q18.5 3 18.5 4 L18.5 14.5 Q18.5 15.5 17.5 15.5 L1.5 15.5 Q0.5 15.5 0.5 14.5 Z" fill="#c2c2c2"/></svg>
<svg style="left:47.4px;top:315.85px;" width="10.8" height="13.5" viewBox="0 0 10.8 13.5"><path d="M0 0 L10.8 6.75 L0 13.5 Z" fill="#6e6e6e"/></svg>
<div class="t" style="left:91.3px;top:309.0px;font-size:18.5px;line-height:24px;color:#d2d2d2;letter-spacing:0.62px;">MixedRealityToolkit.Prerelease.2.4.0.Stabilization</div>
<svg style="left:67px;top:337.7px;" width="22" height="16" viewBox="0 0 22 16"><path d="M1 15 L1 1.5 Q1 0.8 1.8 0.8 L7 0.8 L9 3.2 L16.5 3.2 Q17.3 3.2 17.3 4 L17.3 6" fill="none" stroke="#c2c2c2" stroke-width="1.5"/><path d="M4.6 6.5 L21.5 6.5 L17.8 15.5 L0.8 15.5 Z" fill="#c2c2c2"/></svg>
<svg style="left:46.25px;top:341.55px;" width="12.5" height="10.5" viewBox="0 0 12.5 10.5"><path d="M0 0 L12.5 0 L6.25 10.5 Z" fill="#6e6e6e"/></svg>
<div class="t" style="left:91.3px;top:333.0px;font-size:18.5px;line-height:24px;color:#d2d2d2;letter-spacing:0.32px;">Prefabs</div>
<svg style="left:88px;top:361.7px;" width="19" height="16" viewBox="0 0 19 16"><path d="M0.5 1.5 Q0.5 0.5 1.5 0.5 L7 0.5 L9 3 L17.5 3 Q18.5 3 18.5 4 L18.5 14.5 Q18.5 15.5 17.5 15.5 L1.5 15.5 Q0.5 15.5 0.5 14.5 Z" fill="#c2c2c2"/></svg>
<div class="t" style="left:112.3px;top:357.0px;font-size:18.5px;line-height:24px;color:#d2d2d2;letter-spacing:0.61px;">DebugWindow</div>
<div style="left:0px;top:382px;width:622px;height:24px;background:#4d4d4d;"></div>
<svg style="left:88px;top:385.7px;" width="19" height="16" viewBox="0 0 19 16"><path d="M0.5 1.5 Q0.5 0.5 1.5 0.5 L7 0.5 L9 3 L17.5 3 Q18.5 3 18.5 4 L18.5 14.5 Q18.5 15.5 17.5 15.5 L1.5 15.5 Q0.5 15.5 0.5 14.5 Z" fill="#c2c2c2"/></svg>
<div class="t" style="left:112.3px;top:381.0px;font-size:18.5px;line-height:24px;color:#d2d2d2;letter-spacing:0.71px;">Manager</div>
<svg style="left:88px;top:409.7px;" width="19" height="16" viewBox="0 0 19 16"><path d="M0.5 1.5 Q0.5 0.5 1.5 0.5 L7 0.5 L9 3 L17.5 3 Q18.5 3 18.5 4 L18.5 14.5 Q18.5 15.5 17.5 15.5 L1.5 15.5 Q0.5 15.5 0.5 14.5 Z" fill="#c2c2c2"/></svg>
<div class="t" style="left:112.3px;top:405.0px;font-size:18.5px;line-height:24px;color:#d2d2d2;letter-spacing:-0.25px;">UI</div>
<svg style="left:88px;top:433.7px;" width="22" height="16" viewBox="0 0 22 16"><path d="M1 15 L1 1.5 Q1 0.8 1.8 0.8 L7 0.8 L9 3.2 L16.5 3.2 Q17.3 3.2 17.3 4 L17.3 6" fill="none" stroke="#c2c2c2" stroke-width="1.5"/><path d="M4.6 6.5 L21.5 6.5 L17.8 15.5 L0.8 15.5 Z" fill="#c2c2c2"/></svg>
<svg style="left:67.25px;top:437.55px;" width="12.5" height="10.5" viewBox="0 0 12.5 10.5"><path d="M0 0 L12.5 0 L6.25 10.5 Z" fill="#6e6e6e"/></svg>
<div class="t" style="left:112.3px;top:429.0px;font-size:18.5px;line-height:24px;color:#d2d2d2;letter-spacing:-0.35px;">UX</div>
<svg style="left:109px;top:457.7px;" width="19" height="16" viewBox="0 0 19 16"><path d="M0.5 1.5 Q0.5 0.5 1.5 0.5 L7 0.5 L9 3 L17.5 3 Q18.5 3 18.5 4 L18.5 14.5 Q18.5 15.5 17.5 15.5 L1.5 15.5 Q0.5 15.5 0.5 14.5 Z" fill="#c2c2c2"/></svg>
<div class="t" style="left:133.3px;top:453.0px;font-size:18.5px;line-height:24px;color:#d2d2d2;letter-spacing:0.31px;">Custom Vision</div>
<svg style="left:109px;top:481.7px;" width="19" height="16" viewBox="0 0 19 16"><path d="M0.5 1.5 Q0.5 0.5 1.5 0.5 L7 0.5 L9 3 L17.5 3 Q18.5 3 18.5 4 L18.5 14.5 Q18.5 15.5 17.5 15.5 L1.5 15.5 Q0.5 15.5 0.5 14.5 Z" fill="#c2c2c2"/></svg>
<div class="t" style="left:133.3px;top:477.0px;font-size:18.5px;line-height:24px;color:#d2d2d2;letter-spacing:0.56px;">Spatial Anchors</div>
<svg style="left:67px;top:505.70000000000005px;" width="19" height="16" viewBox="0 0 19 16"><path d="M0.5 1.5 Q0.5 0.5 1.5 0.5 L7 0.5 L9 3 L17.5 3 Q18.5 3 18.5 4 L18.5 14.5 Q18.5 15.5 17.5 15.5 L1.5 15.5 Q0.5 15.5 0.5 14.5 Z" fill="#c2c2c2"/></svg>
<svg style="left:47.4px;top:507.85px;" width="10.8" height="13.5" viewBox="0 0 10.8 13.5"><path d="M0 0 L10.8 6.75 L0 13.5 Z" fill="#6e6e6e"/></svg>
<div class="t" style="left:91.3px;top:501.0px;font-size:18.5px;line-height:24px;color:#d2d2d2;letter-spacing:0.49px;">Scripts</div>
<svg style="left:67px;top:529.7px;" width="19" height="16" viewBox="0 0 19 16"><path d="M0.5 1.5 Q0.5 0.5 1.5 0.5 L7 0.5 L9 3 L17.5 3 Q18.5 3 18.5 4 L18.5 14.5 Q18.5 15.5 17.5 15.5 L1.5 15.5 Q0.5 15.5 0.5 14.5 Z" fill="#c2c2c2"/></svg>
<div class="t" style="left:91.3px;top:525.0px;font-size:18.5px;line-height:24px;color:#d2d2d2;letter-spacing:0.64px;">Textures</div>
<svg style="left:67px;top:553.7px;" width="19" height="16" viewBox="0 0 19 16"><path d="M0.5 1.5 Q0.5 0.5 1.5 0.5 L7 0.5 L9 3 L17.5 3 Q18.5 3 18.5 4 L18.5 14.5 Q18.5 15.5 17.5 15.5 L1.5 15.5 Q0.5 15.5 0.5 14.5 Z" fill="#c2c2c2"/></svg>
<div class="t" style="left:91.3px;top:549.0px;font-size:18.5px;line-height:24px;color:#d2d2d2;letter-spacing:0.36px;">Themes</div>
<svg style="left:46px;top:577.7px;" width="19" height="16" viewBox="0 0 19 16"><path d="M0.5 1.5 Q0.5 0.5 1.5 0.5 L7 0.5 L9 3 L17.5 3 Q18.5 3 18.5 4 L18.5 14.5 Q18.5 15.5 17.5 15.5 L1.5 15.5 Q0.5 15.5 0.5 14.5 Z" fill="#c2c2c2"/></svg>
<svg style="left:26.4px;top:579.85px;" width="10.8" height="13.5" viewBox="0 0 10.8 13.5"><path d="M0 0 L10.8 6.75 L0 13.5 Z" fill="#6e6e6e"/></svg>
<div class="t" style="left:70.3px;top:573.0px;font-size:18.5px;line-height:24px;color:#d2d2d2;letter-spacing:0.43px;">MRTK.Tutorials.AzureSpatialAnchors</div>
<svg style="left:46px;top:601.7px;" width="19" height="16" viewBox="0 0 19 16"><path d="M0.5 1.5 Q0.5 0.5 1.5 0.5 L7 0.5 L9 3 L17.5 3 Q18.5 3 18.5 4 L18.5 14.5 Q18.5 15.5 17.5 15.5 L1.5 15.5 Q0.5 15.5 0.5 14.5 Z" fill="#c2c2c2"/></svg>
<svg style="left:26.4px;top:603.85px;" width="10.8" height="13.5" viewBox="0 0 10.8 13.5"><path d="M0 0 L10.8 6.75 L0 13.5 Z" fill="#6e6e6e"/></svg>
<div class="t" style="left:70.3px;top:597.0px;font-size:18.5px;line-height:24px;color:#d2d2d2;letter-spacing:0.45px;">MRTK.Tutorials.AzureSpeechServices</div>
</div>
<div class="t" style="left:649.5px;top:888.0px;font-size:18.5px;line-height:24px;color:#d2d2d2;letter-spacing:0.08px;">Assets</div>
<div class="t" style="left:732.3px;top:888.0px;font-size:18.5px;line-height:24px;color:#d2d2d2;letter-spacing:0.48px;">MRTK.Tutorials.AzureCloudServices</div>
<div class="t" style="left:1075.0px;top:888.0px;font-size:18.5px;line-height:24px;color:#d2d2d2;letter-spacing:0.25px;">Prefabs</div>
<div class="t" style="left:1168.0px;top:888.0px;font-size:18.5px;line-height:24px;color:#d2d2d2;letter-spacing:0.56px;font-weight:bold;">Manager</div>
<svg style="left:715.25px;top:893.25px;" width="8.5" height="14.5" viewBox="0 0 8.5 14.5"><path d="M1.5 1.5 L6.5 7.25 L1.5 13.0" fill="none" stroke="#8c8c8c" stroke-width="2.1"/></svg>
<svg style="left:1058.25px;top:893.25px;" width="8.5" height="14.5" viewBox="0 0 8.5 14.5"><path d="M1.5 1.5 L6.5 7.25 L1.5 13.0" fill="none" stroke="#8c8c8c" stroke-width="2.1"/></svg>
<svg style="left:1151.25px;top:893.25px;" width="8.5" height="14.5" viewBox="0 0 8.5 14.5"><path d="M1.5 1.5 L6.5 7.25 L1.5 13.0" fill="none" stroke="#8c8c8c" stroke-width="2.1"/></svg>
<svg style="left:667.6px;top:917.1px;" width="22" height="22" viewBox="0 0 22 22"><path d="M11 1 L20.5 5.8 L20.5 16.2 L11 21 L1.5 16.2 L1.5 5.8 Z" fill="#7fd6fd"/><path d="M1.5 5.8 L11 10.6 L20.5 5.8 M11 10.6 L11 21" fill="none" stroke="#333333" stroke-width="1.7"/></svg>
<div class="t" style="left:694.5px;top:916.5px;font-size:18.5px;line-height:24px;color:#d2d2d2;letter-spacing:0.64px;">AnchorManager</div>
<svg style="left:667.6px;top:941.1700000000001px;" width="22" height="22" viewBox="0 0 22 22"><path d="M11 1 L20.5 5.8 L20.5 16.2 L11 21 L1.5 16.2 L1.5 5.8 Z" fill="#7fd6fd"/><path d="M1.5 5.8 L11 10.6 L20.5 5.8 M11 10.6 L11 21" fill="none" stroke="#333333" stroke-width="1.7"/></svg>
<div class="t" style="left:694.5px;top:940.6px;font-size:18.5px;line-height:24px;color:#d2d2d2;letter-spacing:0.65px;">ChatBotManager</div>
<svg style="left:667.6px;top:965.24px;" width="22" height="22" viewBox="0 0 22 22"><path d="M11 1 L20.5 5.8 L20.5 16.2 L11 21 L1.5 16.2 L1.5 5.8 Z" fill="#7fd6fd"/><path d="M1.5 5.8 L11 10.6 L20.5 5.8 M11 10.6 L11 21" fill="none" stroke="#333333" stroke-width="1.7"/></svg>
<div class="t" style="left:694.5px;top:964.6px;font-size:18.5px;line-height:24px;color:#d2d2d2;letter-spacing:0.72px;">DataManager</div>
<svg style="left:667.6px;top:989.3100000000001px;" width="22" height="22" viewBox="0 0 22 22"><path d="M11 1 L20.5 5.8 L20.5 16.2 L11 21 L1.5 16.2 L1.5 5.8 Z" fill="#7fd6fd"/><path d="M1.5 5.8 L11 10.6 L20.5 5.8 M11 10.6 L11 21" fill="none" stroke="#333333" stroke-width="1.7"/></svg>
<div class="t" style="left:694.5px;top:988.7px;font-size:18.5px;line-height:24px;color:#d2d2d2;letter-spacing:0.79px;">ObjectDetectionManager</div>
<svg style="left:667.6px;top:1013.38px;" width="22" height="22" viewBox="0 0 22 22"><path d="M11 1 L20.5 5.8 L20.5 16.2 L11 21 L1.5 16.2 L1.5 5.8 Z" fill="#7fd6fd"/><path d="M1.5 5.8 L11 10.6 L20.5 5.8 M11 10.6 L11 21" fill="none" stroke="#333333" stroke-width="1.7"/></svg>
<div class="t" style="left:694.5px;top:1012.8px;font-size:18.5px;line-height:24px;color:#d2d2d2;letter-spacing:0.46px;">RootMenu</div>
<svg style="left:667.6px;top:1037.4499999999998px;" width="22" height="22" viewBox="0 0 22 22"><path d="M11 1 L20.5 5.8 L20.5 16.2 L11 21 L1.5 16.2 L1.5 5.8 Z" fill="#7fd6fd"/><path d="M1.5 5.8 L11 10.6 L20.5 5.8 M11 10.6 L11 21" fill="none" stroke="#333333" stroke-width="1.7"/></svg>
<div class="t" style="left:694.5px;top:1036.8px;font-size:18.5px;line-height:24px;color:#d2d2d2;letter-spacing:0.62px;">SceneController</div>
<div style="left:1562px;top:1477px;width:71px;height:3px;background:#5e5e5e;"></div>
<svg style="left:1550.4px;top:1470.5px;" width="16" height="16" viewBox="0 0 16 16"><circle cx="8" cy="8" r="7.6" fill="#9a9a9a"/></svg>
</body></html>
